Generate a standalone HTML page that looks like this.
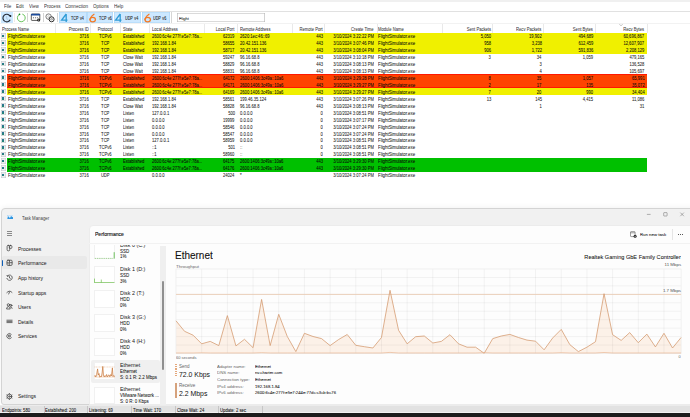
<!DOCTYPE html><html><head><meta charset="utf-8"><style>
html,body{margin:0;padding:0;}
body{width:690px;height:417px;overflow:hidden;position:relative;background:#fff;font-family:"Liberation Sans",sans-serif;}
.a{position:absolute;white-space:nowrap;}
</style></head><body>
<div class="a" style="left:0.00px;top:0.00px;width:690.00px;height:2.00px;background:#f0f0f0;"></div>
<div class="a" style="left:3.80px;top:-34.10px;line-height:80.0px;font-size:19.60px;color:#333;font-weight:normal;transform:scale(0.2325,0.2500);transform-origin:0 50%;">File</div>
<div class="a" style="left:16.00px;top:-34.10px;line-height:80.0px;font-size:19.60px;color:#333;font-weight:normal;transform:scale(0.2325,0.2500);transform-origin:0 50%;">Edit</div>
<div class="a" style="left:29.00px;top:-34.10px;line-height:80.0px;font-size:19.60px;color:#333;font-weight:normal;transform:scale(0.2325,0.2500);transform-origin:0 50%;">View</div>
<div class="a" style="left:44.00px;top:-34.10px;line-height:80.0px;font-size:19.60px;color:#333;font-weight:normal;transform:scale(0.2325,0.2500);transform-origin:0 50%;">Process</div>
<div class="a" style="left:65.00px;top:-34.10px;line-height:80.0px;font-size:19.60px;color:#333;font-weight:normal;transform:scale(0.2325,0.2500);transform-origin:0 50%;">Connection</div>
<div class="a" style="left:93.40px;top:-34.10px;line-height:80.0px;font-size:19.60px;color:#333;font-weight:normal;transform:scale(0.2325,0.2500);transform-origin:0 50%;">Options</div>
<div class="a" style="left:114.00px;top:-34.10px;line-height:80.0px;font-size:19.60px;color:#333;font-weight:normal;transform:scale(0.2325,0.2500);transform-origin:0 50%;">Help</div>
<div class="a" style="left:0.00px;top:11.00px;width:690.00px;height:1.00px;background:#e1e1e1;"></div>
<div class="a" style="left:0.00px;top:23.00px;width:690.00px;height:1.00px;background:#f2f2f2;"></div>
<div class="a" style="left:1.10px;top:12.00px;width:12.00px;height:11.00px;background:#cce8ff;"></div>
<svg class="a" style="left:0;top:0" width="60" height="25" viewBox="0 0 60 25">
<path d="M9.85 15.86 A3.8 3.8 0 1 0 10.18 19.65" fill="none" stroke="#262b36" stroke-width="1.15"/>
<circle cx="10.4" cy="16.0" r="0.95" fill="#15171c"/>
<path d="M6.5 16.2 L6.8 18.9 L8.1 19.6" fill="none" stroke="#a6bcd2" stroke-width="0.7"/>
<path d="M22.31 14.08 A3.9 3.9 0 1 1 19.35 14.47" fill="none" stroke="#62c256" stroke-width="0.95"/>
<circle cx="19.5" cy="14.3" r="0.85" fill="#0c8a18"/>
<rect x="31.3" y="14.1" width="8.5" height="6.3" rx="0.7" fill="#fff" stroke="#262626" stroke-width="0.75"/>
<rect x="31" y="13.8" width="9.1" height="1.8" rx="0.5" fill="#1d4c9c"/>
<circle cx="33.4" cy="17.7" r="0.5" fill="#333"/><circle cx="35.4" cy="17.7" r="0.5" fill="#333"/><circle cx="37.3" cy="17.7" r="0.5" fill="#333"/>
<circle cx="38.7" cy="20.0" r="1.5" fill="#111"/><circle cx="38.7" cy="20.0" r="0.55" fill="#fff"/>
<circle cx="48.6" cy="16.6" r="2.7" fill="#fff" stroke="#666" stroke-width="0.85"/>
<circle cx="48.6" cy="16.6" r="0.9" fill="none" stroke="#999" stroke-width="0.5"/>
<circle cx="51.6" cy="19.3" r="2.5" fill="#fff" stroke="#2e2e2e" stroke-width="1.0"/>
<ellipse cx="51.6" cy="19.3" rx="1.1" ry="0.7" fill="none" stroke="#555" stroke-width="0.55"/>
</svg>
<div class="a" style="left:13.50px;top:13.00px;width:0.60px;height:9.00px;background:#f0ebe6;"></div>
<div class="a" style="left:27.40px;top:13.00px;width:0.80px;height:9.00px;background:#d4d4d4;"></div>
<div class="a" style="left:42.50px;top:13.00px;width:0.80px;height:9.00px;background:#d4d4d4;"></div>
<div class="a" style="left:57.30px;top:13.00px;width:0.80px;height:9.00px;background:#d4d4d4;"></div>
<div class="a" style="left:59.30px;top:12.40px;width:27.40px;height:10.40px;background:#cce8ff;box-shadow: inset 0 0 0 0.6px #a9d5f7;"></div>
<svg class="a" style="left:59.10px;top:12px" width="12" height="11" viewBox="0 0 12 11"><path d="M7.2 2.0 L2.6 8.1 H8.5 M7.2 2.0 V10.0" fill="none" stroke="#2e9bd6" stroke-width="1.3" stroke-linejoin="miter"/></svg>
<div class="a" style="left:70.70px;top:-21.90px;line-height:80.0px;font-size:18.40px;color:#1b1b1b;font-weight:normal;word-spacing:3px;-webkit-text-stroke:0.32px #1b1b1b;transform:scale(0.2000,0.2500);transform-origin:0 50%;">TCP v4</div>
<div class="a" style="left:87.10px;top:12.40px;width:26.10px;height:10.40px;background:#cce8ff;box-shadow: inset 0 0 0 0.6px #a9d5f7;"></div>
<svg class="a" style="left:86.90px;top:12px" width="12" height="11" viewBox="0 0 12 11"><ellipse cx="5.7" cy="7.6" rx="2.75" ry="2.3" fill="none" stroke="#f47a26" stroke-width="1.25"/><path d="M7.0 2.2 Q3.6 4.2 2.95 7.4" fill="none" stroke="#f47a26" stroke-width="1.25" stroke-linecap="round"/></svg>
<div class="a" style="left:98.50px;top:-21.90px;line-height:80.0px;font-size:18.40px;color:#1b1b1b;font-weight:normal;word-spacing:3px;-webkit-text-stroke:0.32px #1b1b1b;transform:scale(0.2000,0.2500);transform-origin:0 50%;">TCP v6</div>
<div class="a" style="left:113.60px;top:12.40px;width:27.70px;height:10.40px;background:#cce8ff;box-shadow: inset 0 0 0 0.6px #a9d5f7;"></div>
<svg class="a" style="left:113.40px;top:12px" width="12" height="11" viewBox="0 0 12 11"><path d="M7.2 2.0 L2.6 8.1 H8.5 M7.2 2.0 V10.0" fill="none" stroke="#2e9bd6" stroke-width="1.3" stroke-linejoin="miter"/></svg>
<div class="a" style="left:125.00px;top:-21.90px;line-height:80.0px;font-size:18.40px;color:#1b1b1b;font-weight:normal;word-spacing:3px;-webkit-text-stroke:0.32px #1b1b1b;transform:scale(0.2000,0.2500);transform-origin:0 50%;">UDP v4</div>
<div class="a" style="left:141.70px;top:12.40px;width:28.10px;height:10.40px;background:#cce8ff;box-shadow: inset 0 0 0 0.6px #a9d5f7;"></div>
<svg class="a" style="left:141.50px;top:12px" width="12" height="11" viewBox="0 0 12 11"><ellipse cx="5.7" cy="7.6" rx="2.75" ry="2.3" fill="none" stroke="#f47a26" stroke-width="1.25"/><path d="M7.0 2.2 Q3.6 4.2 2.95 7.4" fill="none" stroke="#f47a26" stroke-width="1.25" stroke-linecap="round"/></svg>
<div class="a" style="left:153.10px;top:-21.90px;line-height:80.0px;font-size:18.40px;color:#1b1b1b;font-weight:normal;word-spacing:3px;-webkit-text-stroke:0.32px #1b1b1b;transform:scale(0.2000,0.2500);transform-origin:0 50%;">UDP v6</div>
<div class="a" style="left:177.00px;top:13.00px;width:87.50px;height:9.00px;background:#fff;box-shadow: inset 0 0 0 0.6px #b5b5b5;"></div>
<div class="a" style="left:178.80px;top:-22.50px;line-height:80.0px;font-size:17.60px;color:#111;font-weight:normal;-webkit-text-stroke:0.16px #111;transform:scale(0.2325,0.2500);transform-origin:0 50%;">Flight</div>
<div class="a" style="left:170.60px;top:12.40px;width:0.60px;height:10.40px;background:#d6d6d6;"></div>
<div class="a" style="left:54.80px;top:24.00px;width:0.60px;height:8.75px;background:#e9e9e9;"></div>
<div class="a" style="left:90.40px;top:24.00px;width:0.60px;height:8.75px;background:#e9e9e9;"></div>
<div class="a" style="left:120.00px;top:24.00px;width:0.60px;height:8.75px;background:#e9e9e9;"></div>
<div class="a" style="left:148.70px;top:24.00px;width:0.60px;height:8.75px;background:#e9e9e9;"></div>
<div class="a" style="left:204.30px;top:24.00px;width:0.60px;height:8.75px;background:#e9e9e9;"></div>
<div class="a" style="left:236.50px;top:24.00px;width:0.60px;height:8.75px;background:#e9e9e9;"></div>
<div class="a" style="left:291.70px;top:24.00px;width:0.60px;height:8.75px;background:#e9e9e9;"></div>
<div class="a" style="left:324.40px;top:24.00px;width:0.60px;height:8.75px;background:#e9e9e9;"></div>
<div class="a" style="left:376.50px;top:24.00px;width:0.60px;height:8.75px;background:#e9e9e9;"></div>
<div class="a" style="left:441.70px;top:24.00px;width:0.60px;height:8.75px;background:#e9e9e9;"></div>
<div class="a" style="left:491.70px;top:24.00px;width:0.60px;height:8.75px;background:#e9e9e9;"></div>
<div class="a" style="left:543.00px;top:24.00px;width:0.60px;height:8.75px;background:#e9e9e9;"></div>
<div class="a" style="left:595.20px;top:24.00px;width:0.60px;height:8.75px;background:#e9e9e9;"></div>
<div class="a" style="left:646.50px;top:24.00px;width:0.60px;height:8.75px;background:#e9e9e9;"></div>
<div class="a" style="left:2.00px;top:-11.40px;line-height:80.0px;font-size:19.20px;color:#3a3a3a;font-weight:normal;-webkit-text-stroke:0.20px #3a3a3a;transform:scale(0.2150,0.2500);transform-origin:0 50%;">Process Name</div>
<div class="a" style="right:601.00px;top:-11.40px;line-height:80.0px;font-size:19.20px;color:#3a3a3a;font-weight:normal;-webkit-text-stroke:0.20px #3a3a3a;text-align:right;transform:scale(0.2150,0.2500);transform-origin:100% 50%;">Process ID</div>
<div class="a" style="left:-825.03px;width:1860.47px;text-align:center;top:-11.40px;line-height:80.0px;font-size:19.20px;color:#3a3a3a;font-weight:normal;-webkit-text-stroke:0.20px #3a3a3a;transform:scale(0.2150,0.2500);transform-origin:50% 50%;">Protocol</div>
<div class="a" style="left:122.60px;top:-11.40px;line-height:80.0px;font-size:19.20px;color:#3a3a3a;font-weight:normal;-webkit-text-stroke:0.20px #3a3a3a;transform:scale(0.2150,0.2500);transform-origin:0 50%;">State</div>
<div class="a" style="left:151.80px;top:-11.40px;line-height:80.0px;font-size:19.20px;color:#3a3a3a;font-weight:normal;-webkit-text-stroke:0.20px #3a3a3a;transform:scale(0.2150,0.2500);transform-origin:0 50%;">Local Address</div>
<div class="a" style="right:455.20px;top:-11.40px;line-height:80.0px;font-size:19.20px;color:#3a3a3a;font-weight:normal;-webkit-text-stroke:0.20px #3a3a3a;text-align:right;transform:scale(0.2150,0.2500);transform-origin:100% 50%;">Local Port</div>
<div class="a" style="left:239.50px;top:-11.40px;line-height:80.0px;font-size:19.20px;color:#3a3a3a;font-weight:normal;-webkit-text-stroke:0.20px #3a3a3a;transform:scale(0.2150,0.2500);transform-origin:0 50%;">Remote Address</div>
<div class="a" style="right:367.30px;top:-11.40px;line-height:80.0px;font-size:19.20px;color:#3a3a3a;font-weight:normal;-webkit-text-stroke:0.20px #3a3a3a;text-align:right;transform:scale(0.2150,0.2500);transform-origin:100% 50%;">Remote Port</div>
<div class="a" style="right:316.20px;top:-11.40px;line-height:80.0px;font-size:19.20px;color:#3a3a3a;font-weight:normal;-webkit-text-stroke:0.20px #3a3a3a;text-align:right;transform:scale(0.2150,0.2500);transform-origin:100% 50%;">Create Time</div>
<div class="a" style="left:378.30px;top:-11.40px;line-height:80.0px;font-size:19.20px;color:#3a3a3a;font-weight:normal;-webkit-text-stroke:0.20px #3a3a3a;transform:scale(0.2150,0.2500);transform-origin:0 50%;">Module Name</div>
<div class="a" style="right:199.10px;top:-11.40px;line-height:80.0px;font-size:19.20px;color:#3a3a3a;font-weight:normal;-webkit-text-stroke:0.20px #3a3a3a;text-align:right;transform:scale(0.2150,0.2500);transform-origin:100% 50%;">Sent Packets</div>
<div class="a" style="right:148.40px;top:-11.40px;line-height:80.0px;font-size:19.20px;color:#3a3a3a;font-weight:normal;-webkit-text-stroke:0.20px #3a3a3a;text-align:right;transform:scale(0.2150,0.2500);transform-origin:100% 50%;">Recv Packets</div>
<div class="a" style="right:97.00px;top:-11.40px;line-height:80.0px;font-size:19.20px;color:#3a3a3a;font-weight:normal;-webkit-text-stroke:0.20px #3a3a3a;text-align:right;transform:scale(0.2150,0.2500);transform-origin:100% 50%;">Sent Bytes</div>
<div class="a" style="right:45.60px;top:-11.40px;line-height:80.0px;font-size:19.20px;color:#3a3a3a;font-weight:normal;-webkit-text-stroke:0.20px #3a3a3a;text-align:right;transform:scale(0.2150,0.2500);transform-origin:100% 50%;">Recv Bytes</div>
<svg class="a" style="left:619px;top:23.6px" width="4" height="2" viewBox="0 0 4 2"><path d="M0.3 0.3 L2 1.7 L3.7 0.3" fill="none" stroke="#888" stroke-width="0.5"/></svg>
<div class="a" style="left:6.90px;top:32.75px;width:640.30px;height:6.95px;background:#f0f000;"></div>
<div class="a" style="left:1.2px;top:33.35px;width:4.7px;height:5.3px;background:#eceef0;box-shadow:inset 0 0 0 0.5px #c4c8cc;"></div>
<div class="a" style="left:2.4px;top:34.75px;width:1.6px;height:2.6px;background:linear-gradient(#2f6fa0,#1e8a6a);"></div>
<div class="a" style="left:8.00px;top:-3.77px;line-height:80.0px;font-size:19.20px;color:#0a0a0a;font-weight:normal;-webkit-text-stroke:0.20px #0a0a0a;transform:scale(0.2275,0.2500);transform-origin:0 50%;">FlightSimulator.exe</div>
<div class="a" style="right:601.20px;top:-3.77px;line-height:80.0px;font-size:19.20px;color:#0a0a0a;font-weight:normal;-webkit-text-stroke:0.20px #0a0a0a;text-align:right;transform:scale(0.2150,0.2500);transform-origin:100% 50%;">3716</div>
<div class="a" style="left:-824.83px;width:1860.47px;text-align:center;top:-3.77px;line-height:80.0px;font-size:19.20px;color:#0a0a0a;font-weight:normal;-webkit-text-stroke:0.20px #0a0a0a;transform:scale(0.2150,0.2500);transform-origin:50% 50%;">TCPv6</div>
<div class="a" style="left:122.60px;top:-3.77px;line-height:80.0px;font-size:19.20px;color:#0a0a0a;font-weight:normal;-webkit-text-stroke:0.20px #0a0a0a;transform:scale(0.2150,0.2500);transform-origin:0 50%;">Established</div>
<div class="a" style="left:151.80px;top:-3.77px;line-height:80.0px;font-size:19.20px;color:#0a0a0a;font-weight:normal;-webkit-text-stroke:0.20px #0a0a0a;transform:scale(0.2150,0.2500);transform-origin:0 50%;">2600:6c4e:277f:e5e7:78a...</div>
<div class="a" style="right:455.20px;top:-3.77px;line-height:80.0px;font-size:19.20px;color:#0a0a0a;font-weight:normal;-webkit-text-stroke:0.20px #0a0a0a;text-align:right;transform:scale(0.2150,0.2500);transform-origin:100% 50%;">62319</div>
<div class="a" style="left:239.50px;top:-3.77px;line-height:80.0px;font-size:19.20px;color:#0a0a0a;font-weight:normal;-webkit-text-stroke:0.20px #0a0a0a;transform:scale(0.2150,0.2500);transform-origin:0 50%;">2620:1ec:46::69</div>
<div class="a" style="right:367.30px;top:-3.77px;line-height:80.0px;font-size:19.20px;color:#0a0a0a;font-weight:normal;-webkit-text-stroke:0.20px #0a0a0a;text-align:right;transform:scale(0.2150,0.2500);transform-origin:100% 50%;">443</div>
<div class="a" style="right:316.20px;top:-3.77px;line-height:80.0px;font-size:19.20px;color:#0a0a0a;font-weight:normal;-webkit-text-stroke:0.20px #0a0a0a;text-align:right;transform:scale(0.2150,0.2500);transform-origin:100% 50%;">3/10/2024 3:22:22 PM</div>
<div class="a" style="left:378.30px;top:-3.77px;line-height:80.0px;font-size:19.20px;color:#0a0a0a;font-weight:normal;-webkit-text-stroke:0.20px #0a0a0a;transform:scale(0.2275,0.2500);transform-origin:0 50%;">FlightSimulator.exe</div>
<div class="a" style="right:199.10px;top:-3.77px;line-height:80.0px;font-size:19.20px;color:#0a0a0a;font-weight:normal;-webkit-text-stroke:0.20px #0a0a0a;text-align:right;transform:scale(0.2150,0.2500);transform-origin:100% 50%;">5,050</div>
<div class="a" style="right:148.40px;top:-3.77px;line-height:80.0px;font-size:19.20px;color:#0a0a0a;font-weight:normal;-webkit-text-stroke:0.20px #0a0a0a;text-align:right;transform:scale(0.2150,0.2500);transform-origin:100% 50%;">19,902</div>
<div class="a" style="right:97.00px;top:-3.77px;line-height:80.0px;font-size:19.20px;color:#0a0a0a;font-weight:normal;-webkit-text-stroke:0.20px #0a0a0a;text-align:right;transform:scale(0.2150,0.2500);transform-origin:100% 50%;">494,689</div>
<div class="a" style="right:45.60px;top:-3.77px;line-height:80.0px;font-size:19.20px;color:#0a0a0a;font-weight:normal;-webkit-text-stroke:0.20px #0a0a0a;text-align:right;transform:scale(0.2150,0.2500);transform-origin:100% 50%;">60,696,867</div>
<div class="a" style="left:6.90px;top:39.70px;width:640.30px;height:6.95px;background:#f0f000;"></div>
<div class="a" style="left:1.2px;top:40.30px;width:4.7px;height:5.3px;background:#eceef0;box-shadow:inset 0 0 0 0.5px #c4c8cc;"></div>
<div class="a" style="left:2.4px;top:41.70px;width:1.6px;height:2.6px;background:linear-gradient(#2f6fa0,#1e8a6a);"></div>
<div class="a" style="left:8.00px;top:3.18px;line-height:80.0px;font-size:19.20px;color:#0a0a0a;font-weight:normal;-webkit-text-stroke:0.20px #0a0a0a;transform:scale(0.2275,0.2500);transform-origin:0 50%;">FlightSimulator.exe</div>
<div class="a" style="right:601.20px;top:3.18px;line-height:80.0px;font-size:19.20px;color:#0a0a0a;font-weight:normal;-webkit-text-stroke:0.20px #0a0a0a;text-align:right;transform:scale(0.2150,0.2500);transform-origin:100% 50%;">3716</div>
<div class="a" style="left:-824.83px;width:1860.47px;text-align:center;top:3.18px;line-height:80.0px;font-size:19.20px;color:#0a0a0a;font-weight:normal;-webkit-text-stroke:0.20px #0a0a0a;transform:scale(0.2150,0.2500);transform-origin:50% 50%;">TCP</div>
<div class="a" style="left:122.60px;top:3.18px;line-height:80.0px;font-size:19.20px;color:#0a0a0a;font-weight:normal;-webkit-text-stroke:0.20px #0a0a0a;transform:scale(0.2150,0.2500);transform-origin:0 50%;">Established</div>
<div class="a" style="left:151.80px;top:3.18px;line-height:80.0px;font-size:19.20px;color:#0a0a0a;font-weight:normal;-webkit-text-stroke:0.20px #0a0a0a;transform:scale(0.2150,0.2500);transform-origin:0 50%;">192.168.1.84</div>
<div class="a" style="right:455.20px;top:3.18px;line-height:80.0px;font-size:19.20px;color:#0a0a0a;font-weight:normal;-webkit-text-stroke:0.20px #0a0a0a;text-align:right;transform:scale(0.2150,0.2500);transform-origin:100% 50%;">58655</div>
<div class="a" style="left:239.50px;top:3.18px;line-height:80.0px;font-size:19.20px;color:#0a0a0a;font-weight:normal;-webkit-text-stroke:0.20px #0a0a0a;transform:scale(0.2150,0.2500);transform-origin:0 50%;">20.42.151.136</div>
<div class="a" style="right:367.30px;top:3.18px;line-height:80.0px;font-size:19.20px;color:#0a0a0a;font-weight:normal;-webkit-text-stroke:0.20px #0a0a0a;text-align:right;transform:scale(0.2150,0.2500);transform-origin:100% 50%;">443</div>
<div class="a" style="right:316.20px;top:3.18px;line-height:80.0px;font-size:19.20px;color:#0a0a0a;font-weight:normal;-webkit-text-stroke:0.20px #0a0a0a;text-align:right;transform:scale(0.2150,0.2500);transform-origin:100% 50%;">3/10/2024 3:07:46 PM</div>
<div class="a" style="left:378.30px;top:3.18px;line-height:80.0px;font-size:19.20px;color:#0a0a0a;font-weight:normal;-webkit-text-stroke:0.20px #0a0a0a;transform:scale(0.2275,0.2500);transform-origin:0 50%;">FlightSimulator.exe</div>
<div class="a" style="right:199.10px;top:3.18px;line-height:80.0px;font-size:19.20px;color:#0a0a0a;font-weight:normal;-webkit-text-stroke:0.20px #0a0a0a;text-align:right;transform:scale(0.2150,0.2500);transform-origin:100% 50%;">958</div>
<div class="a" style="right:148.40px;top:3.18px;line-height:80.0px;font-size:19.20px;color:#0a0a0a;font-weight:normal;-webkit-text-stroke:0.20px #0a0a0a;text-align:right;transform:scale(0.2150,0.2500);transform-origin:100% 50%;">3,238</div>
<div class="a" style="right:97.00px;top:3.18px;line-height:80.0px;font-size:19.20px;color:#0a0a0a;font-weight:normal;-webkit-text-stroke:0.20px #0a0a0a;text-align:right;transform:scale(0.2150,0.2500);transform-origin:100% 50%;">612,459</div>
<div class="a" style="right:45.60px;top:3.18px;line-height:80.0px;font-size:19.20px;color:#0a0a0a;font-weight:normal;-webkit-text-stroke:0.20px #0a0a0a;text-align:right;transform:scale(0.2150,0.2500);transform-origin:100% 50%;">12,607,907</div>
<div class="a" style="left:6.90px;top:46.65px;width:640.30px;height:6.95px;background:#f0f000;"></div>
<div class="a" style="left:1.2px;top:47.25px;width:4.7px;height:5.3px;background:#eceef0;box-shadow:inset 0 0 0 0.5px #c4c8cc;"></div>
<div class="a" style="left:2.4px;top:48.65px;width:1.6px;height:2.6px;background:linear-gradient(#2f6fa0,#1e8a6a);"></div>
<div class="a" style="left:8.00px;top:10.12px;line-height:80.0px;font-size:19.20px;color:#0a0a0a;font-weight:normal;-webkit-text-stroke:0.20px #0a0a0a;transform:scale(0.2275,0.2500);transform-origin:0 50%;">FlightSimulator.exe</div>
<div class="a" style="right:601.20px;top:10.12px;line-height:80.0px;font-size:19.20px;color:#0a0a0a;font-weight:normal;-webkit-text-stroke:0.20px #0a0a0a;text-align:right;transform:scale(0.2150,0.2500);transform-origin:100% 50%;">3716</div>
<div class="a" style="left:-824.83px;width:1860.47px;text-align:center;top:10.12px;line-height:80.0px;font-size:19.20px;color:#0a0a0a;font-weight:normal;-webkit-text-stroke:0.20px #0a0a0a;transform:scale(0.2150,0.2500);transform-origin:50% 50%;">TCP</div>
<div class="a" style="left:122.60px;top:10.12px;line-height:80.0px;font-size:19.20px;color:#0a0a0a;font-weight:normal;-webkit-text-stroke:0.20px #0a0a0a;transform:scale(0.2150,0.2500);transform-origin:0 50%;">Established</div>
<div class="a" style="left:151.80px;top:10.12px;line-height:80.0px;font-size:19.20px;color:#0a0a0a;font-weight:normal;-webkit-text-stroke:0.20px #0a0a0a;transform:scale(0.2150,0.2500);transform-origin:0 50%;">192.168.1.84</div>
<div class="a" style="right:455.20px;top:10.12px;line-height:80.0px;font-size:19.20px;color:#0a0a0a;font-weight:normal;-webkit-text-stroke:0.20px #0a0a0a;text-align:right;transform:scale(0.2150,0.2500);transform-origin:100% 50%;">58717</div>
<div class="a" style="left:239.50px;top:10.12px;line-height:80.0px;font-size:19.20px;color:#0a0a0a;font-weight:normal;-webkit-text-stroke:0.20px #0a0a0a;transform:scale(0.2150,0.2500);transform-origin:0 50%;">20.42.151.136</div>
<div class="a" style="right:367.30px;top:10.12px;line-height:80.0px;font-size:19.20px;color:#0a0a0a;font-weight:normal;-webkit-text-stroke:0.20px #0a0a0a;text-align:right;transform:scale(0.2150,0.2500);transform-origin:100% 50%;">443</div>
<div class="a" style="right:316.20px;top:10.12px;line-height:80.0px;font-size:19.20px;color:#0a0a0a;font-weight:normal;-webkit-text-stroke:0.20px #0a0a0a;text-align:right;transform:scale(0.2150,0.2500);transform-origin:100% 50%;">3/10/2024 3:08:04 PM</div>
<div class="a" style="left:378.30px;top:10.12px;line-height:80.0px;font-size:19.20px;color:#0a0a0a;font-weight:normal;-webkit-text-stroke:0.20px #0a0a0a;transform:scale(0.2275,0.2500);transform-origin:0 50%;">FlightSimulator.exe</div>
<div class="a" style="right:199.10px;top:10.12px;line-height:80.0px;font-size:19.20px;color:#0a0a0a;font-weight:normal;-webkit-text-stroke:0.20px #0a0a0a;text-align:right;transform:scale(0.2150,0.2500);transform-origin:100% 50%;">906</div>
<div class="a" style="right:148.40px;top:10.12px;line-height:80.0px;font-size:19.20px;color:#0a0a0a;font-weight:normal;-webkit-text-stroke:0.20px #0a0a0a;text-align:right;transform:scale(0.2150,0.2500);transform-origin:100% 50%;">1,722</div>
<div class="a" style="right:97.00px;top:10.12px;line-height:80.0px;font-size:19.20px;color:#0a0a0a;font-weight:normal;-webkit-text-stroke:0.20px #0a0a0a;text-align:right;transform:scale(0.2150,0.2500);transform-origin:100% 50%;">591,836</div>
<div class="a" style="right:45.60px;top:10.12px;line-height:80.0px;font-size:19.20px;color:#0a0a0a;font-weight:normal;-webkit-text-stroke:0.20px #0a0a0a;text-align:right;transform:scale(0.2150,0.2500);transform-origin:100% 50%;">2,208,129</div>
<div class="a" style="left:1.2px;top:54.20px;width:4.7px;height:5.3px;background:#eceef0;box-shadow:inset 0 0 0 0.5px #c4c8cc;"></div>
<div class="a" style="left:2.4px;top:55.60px;width:1.6px;height:2.6px;background:linear-gradient(#2f6fa0,#1e8a6a);"></div>
<div class="a" style="left:8.00px;top:17.08px;line-height:80.0px;font-size:19.20px;color:#1a1a1a;font-weight:normal;-webkit-text-stroke:0.20px #1a1a1a;transform:scale(0.2275,0.2500);transform-origin:0 50%;">FlightSimulator.exe</div>
<div class="a" style="right:601.20px;top:17.08px;line-height:80.0px;font-size:19.20px;color:#1a1a1a;font-weight:normal;-webkit-text-stroke:0.20px #1a1a1a;text-align:right;transform:scale(0.2150,0.2500);transform-origin:100% 50%;">3716</div>
<div class="a" style="left:-824.83px;width:1860.47px;text-align:center;top:17.08px;line-height:80.0px;font-size:19.20px;color:#1a1a1a;font-weight:normal;-webkit-text-stroke:0.20px #1a1a1a;transform:scale(0.2150,0.2500);transform-origin:50% 50%;">TCP</div>
<div class="a" style="left:122.60px;top:17.08px;line-height:80.0px;font-size:19.20px;color:#1a1a1a;font-weight:normal;-webkit-text-stroke:0.20px #1a1a1a;transform:scale(0.2150,0.2500);transform-origin:0 50%;">Close Wait</div>
<div class="a" style="left:151.80px;top:17.08px;line-height:80.0px;font-size:19.20px;color:#1a1a1a;font-weight:normal;-webkit-text-stroke:0.20px #1a1a1a;transform:scale(0.2150,0.2500);transform-origin:0 50%;">192.168.1.84</div>
<div class="a" style="right:455.20px;top:17.08px;line-height:80.0px;font-size:19.20px;color:#1a1a1a;font-weight:normal;-webkit-text-stroke:0.20px #1a1a1a;text-align:right;transform:scale(0.2150,0.2500);transform-origin:100% 50%;">59247</div>
<div class="a" style="left:239.50px;top:17.08px;line-height:80.0px;font-size:19.20px;color:#1a1a1a;font-weight:normal;-webkit-text-stroke:0.20px #1a1a1a;transform:scale(0.2150,0.2500);transform-origin:0 50%;">96.16.68.8</div>
<div class="a" style="right:367.30px;top:17.08px;line-height:80.0px;font-size:19.20px;color:#1a1a1a;font-weight:normal;-webkit-text-stroke:0.20px #1a1a1a;text-align:right;transform:scale(0.2150,0.2500);transform-origin:100% 50%;">443</div>
<div class="a" style="right:316.20px;top:17.08px;line-height:80.0px;font-size:19.20px;color:#1a1a1a;font-weight:normal;-webkit-text-stroke:0.20px #1a1a1a;text-align:right;transform:scale(0.2150,0.2500);transform-origin:100% 50%;">3/10/2024 3:10:18 PM</div>
<div class="a" style="left:378.30px;top:17.08px;line-height:80.0px;font-size:19.20px;color:#1a1a1a;font-weight:normal;-webkit-text-stroke:0.20px #1a1a1a;transform:scale(0.2275,0.2500);transform-origin:0 50%;">FlightSimulator.exe</div>
<div class="a" style="right:199.10px;top:17.08px;line-height:80.0px;font-size:19.20px;color:#1a1a1a;font-weight:normal;-webkit-text-stroke:0.20px #1a1a1a;text-align:right;transform:scale(0.2150,0.2500);transform-origin:100% 50%;">3</div>
<div class="a" style="right:148.40px;top:17.08px;line-height:80.0px;font-size:19.20px;color:#1a1a1a;font-weight:normal;-webkit-text-stroke:0.20px #1a1a1a;text-align:right;transform:scale(0.2150,0.2500);transform-origin:100% 50%;">34</div>
<div class="a" style="right:97.00px;top:17.08px;line-height:80.0px;font-size:19.20px;color:#1a1a1a;font-weight:normal;-webkit-text-stroke:0.20px #1a1a1a;text-align:right;transform:scale(0.2150,0.2500);transform-origin:100% 50%;">1,059</div>
<div class="a" style="right:45.60px;top:17.08px;line-height:80.0px;font-size:19.20px;color:#1a1a1a;font-weight:normal;-webkit-text-stroke:0.20px #1a1a1a;text-align:right;transform:scale(0.2150,0.2500);transform-origin:100% 50%;">479,165</div>
<div class="a" style="left:1.2px;top:61.15px;width:4.7px;height:5.3px;background:#eceef0;box-shadow:inset 0 0 0 0.5px #c4c8cc;"></div>
<div class="a" style="left:2.4px;top:62.55px;width:1.6px;height:2.6px;background:linear-gradient(#2f6fa0,#1e8a6a);"></div>
<div class="a" style="left:8.00px;top:24.02px;line-height:80.0px;font-size:19.20px;color:#1a1a1a;font-weight:normal;-webkit-text-stroke:0.20px #1a1a1a;transform:scale(0.2275,0.2500);transform-origin:0 50%;">FlightSimulator.exe</div>
<div class="a" style="right:601.20px;top:24.02px;line-height:80.0px;font-size:19.20px;color:#1a1a1a;font-weight:normal;-webkit-text-stroke:0.20px #1a1a1a;text-align:right;transform:scale(0.2150,0.2500);transform-origin:100% 50%;">3716</div>
<div class="a" style="left:-824.83px;width:1860.47px;text-align:center;top:24.02px;line-height:80.0px;font-size:19.20px;color:#1a1a1a;font-weight:normal;-webkit-text-stroke:0.20px #1a1a1a;transform:scale(0.2150,0.2500);transform-origin:50% 50%;">TCP</div>
<div class="a" style="left:122.60px;top:24.02px;line-height:80.0px;font-size:19.20px;color:#1a1a1a;font-weight:normal;-webkit-text-stroke:0.20px #1a1a1a;transform:scale(0.2150,0.2500);transform-origin:0 50%;">Close Wait</div>
<div class="a" style="left:151.80px;top:24.02px;line-height:80.0px;font-size:19.20px;color:#1a1a1a;font-weight:normal;-webkit-text-stroke:0.20px #1a1a1a;transform:scale(0.2150,0.2500);transform-origin:0 50%;">192.168.1.84</div>
<div class="a" style="right:455.20px;top:24.02px;line-height:80.0px;font-size:19.20px;color:#1a1a1a;font-weight:normal;-webkit-text-stroke:0.20px #1a1a1a;text-align:right;transform:scale(0.2150,0.2500);transform-origin:100% 50%;">58829</div>
<div class="a" style="left:239.50px;top:24.02px;line-height:80.0px;font-size:19.20px;color:#1a1a1a;font-weight:normal;-webkit-text-stroke:0.20px #1a1a1a;transform:scale(0.2150,0.2500);transform-origin:0 50%;">96.16.68.8</div>
<div class="a" style="right:367.30px;top:24.02px;line-height:80.0px;font-size:19.20px;color:#1a1a1a;font-weight:normal;-webkit-text-stroke:0.20px #1a1a1a;text-align:right;transform:scale(0.2150,0.2500);transform-origin:100% 50%;">443</div>
<div class="a" style="right:316.20px;top:24.02px;line-height:80.0px;font-size:19.20px;color:#1a1a1a;font-weight:normal;-webkit-text-stroke:0.20px #1a1a1a;text-align:right;transform:scale(0.2150,0.2500);transform-origin:100% 50%;">3/10/2024 3:08:13 PM</div>
<div class="a" style="left:378.30px;top:24.02px;line-height:80.0px;font-size:19.20px;color:#1a1a1a;font-weight:normal;-webkit-text-stroke:0.20px #1a1a1a;transform:scale(0.2275,0.2500);transform-origin:0 50%;">FlightSimulator.exe</div>
<div class="a" style="right:148.40px;top:24.02px;line-height:80.0px;font-size:19.20px;color:#1a1a1a;font-weight:normal;-webkit-text-stroke:0.20px #1a1a1a;text-align:right;transform:scale(0.2150,0.2500);transform-origin:100% 50%;">3</div>
<div class="a" style="right:45.60px;top:24.02px;line-height:80.0px;font-size:19.20px;color:#1a1a1a;font-weight:normal;-webkit-text-stroke:0.20px #1a1a1a;text-align:right;transform:scale(0.2150,0.2500);transform-origin:100% 50%;">136,528</div>
<div class="a" style="left:1.2px;top:68.10px;width:4.7px;height:5.3px;background:#eceef0;box-shadow:inset 0 0 0 0.5px #c4c8cc;"></div>
<div class="a" style="left:2.4px;top:69.50px;width:1.6px;height:2.6px;background:linear-gradient(#2f6fa0,#1e8a6a);"></div>
<div class="a" style="left:8.00px;top:30.97px;line-height:80.0px;font-size:19.20px;color:#1a1a1a;font-weight:normal;-webkit-text-stroke:0.20px #1a1a1a;transform:scale(0.2275,0.2500);transform-origin:0 50%;">FlightSimulator.exe</div>
<div class="a" style="right:601.20px;top:30.97px;line-height:80.0px;font-size:19.20px;color:#1a1a1a;font-weight:normal;-webkit-text-stroke:0.20px #1a1a1a;text-align:right;transform:scale(0.2150,0.2500);transform-origin:100% 50%;">3716</div>
<div class="a" style="left:-824.83px;width:1860.47px;text-align:center;top:30.97px;line-height:80.0px;font-size:19.20px;color:#1a1a1a;font-weight:normal;-webkit-text-stroke:0.20px #1a1a1a;transform:scale(0.2150,0.2500);transform-origin:50% 50%;">TCP</div>
<div class="a" style="left:122.60px;top:30.97px;line-height:80.0px;font-size:19.20px;color:#1a1a1a;font-weight:normal;-webkit-text-stroke:0.20px #1a1a1a;transform:scale(0.2150,0.2500);transform-origin:0 50%;">Close Wait</div>
<div class="a" style="left:151.80px;top:30.97px;line-height:80.0px;font-size:19.20px;color:#1a1a1a;font-weight:normal;-webkit-text-stroke:0.20px #1a1a1a;transform:scale(0.2150,0.2500);transform-origin:0 50%;">192.168.1.84</div>
<div class="a" style="right:455.20px;top:30.97px;line-height:80.0px;font-size:19.20px;color:#1a1a1a;font-weight:normal;-webkit-text-stroke:0.20px #1a1a1a;text-align:right;transform:scale(0.2150,0.2500);transform-origin:100% 50%;">58831</div>
<div class="a" style="left:239.50px;top:30.97px;line-height:80.0px;font-size:19.20px;color:#1a1a1a;font-weight:normal;-webkit-text-stroke:0.20px #1a1a1a;transform:scale(0.2150,0.2500);transform-origin:0 50%;">96.16.68.8</div>
<div class="a" style="right:367.30px;top:30.97px;line-height:80.0px;font-size:19.20px;color:#1a1a1a;font-weight:normal;-webkit-text-stroke:0.20px #1a1a1a;text-align:right;transform:scale(0.2150,0.2500);transform-origin:100% 50%;">443</div>
<div class="a" style="right:316.20px;top:30.97px;line-height:80.0px;font-size:19.20px;color:#1a1a1a;font-weight:normal;-webkit-text-stroke:0.20px #1a1a1a;text-align:right;transform:scale(0.2150,0.2500);transform-origin:100% 50%;">3/10/2024 3:08:13 PM</div>
<div class="a" style="left:378.30px;top:30.97px;line-height:80.0px;font-size:19.20px;color:#1a1a1a;font-weight:normal;-webkit-text-stroke:0.20px #1a1a1a;transform:scale(0.2275,0.2500);transform-origin:0 50%;">FlightSimulator.exe</div>
<div class="a" style="right:148.40px;top:30.97px;line-height:80.0px;font-size:19.20px;color:#1a1a1a;font-weight:normal;-webkit-text-stroke:0.20px #1a1a1a;text-align:right;transform:scale(0.2150,0.2500);transform-origin:100% 50%;">4</div>
<div class="a" style="right:45.60px;top:30.97px;line-height:80.0px;font-size:19.20px;color:#1a1a1a;font-weight:normal;-webkit-text-stroke:0.20px #1a1a1a;text-align:right;transform:scale(0.2150,0.2500);transform-origin:100% 50%;">105,697</div>
<div class="a" style="left:6.90px;top:74.45px;width:640.30px;height:6.95px;background:#ff4400;"></div>
<div class="a" style="left:6.90px;top:74.45px;width:640.30px;height:0.90px;background:#ff1800;"></div>
<div class="a" style="left:1.2px;top:75.05px;width:4.7px;height:5.3px;background:#eceef0;box-shadow:inset 0 0 0 0.5px #c4c8cc;"></div>
<div class="a" style="left:2.4px;top:76.45px;width:1.6px;height:2.6px;background:linear-gradient(#2f6fa0,#1e8a6a);"></div>
<div class="a" style="left:8.00px;top:37.92px;line-height:80.0px;font-size:19.20px;color:#0a0a0a;font-weight:normal;-webkit-text-stroke:0.20px #0a0a0a;transform:scale(0.2275,0.2500);transform-origin:0 50%;">FlightSimulator.exe</div>
<div class="a" style="right:601.20px;top:37.92px;line-height:80.0px;font-size:19.20px;color:#0a0a0a;font-weight:normal;-webkit-text-stroke:0.20px #0a0a0a;text-align:right;transform:scale(0.2150,0.2500);transform-origin:100% 50%;">3716</div>
<div class="a" style="left:-824.83px;width:1860.47px;text-align:center;top:37.92px;line-height:80.0px;font-size:19.20px;color:#0a0a0a;font-weight:normal;-webkit-text-stroke:0.20px #0a0a0a;transform:scale(0.2150,0.2500);transform-origin:50% 50%;">TCPv6</div>
<div class="a" style="left:122.60px;top:37.92px;line-height:80.0px;font-size:19.20px;color:#0a0a0a;font-weight:normal;-webkit-text-stroke:0.20px #0a0a0a;transform:scale(0.2150,0.2500);transform-origin:0 50%;">Established</div>
<div class="a" style="left:151.80px;top:37.92px;line-height:80.0px;font-size:19.20px;color:#0a0a0a;font-weight:normal;-webkit-text-stroke:0.20px #0a0a0a;transform:scale(0.2150,0.2500);transform-origin:0 50%;">2600:6c4e:277f:e5e7:78a...</div>
<div class="a" style="right:455.20px;top:37.92px;line-height:80.0px;font-size:19.20px;color:#0a0a0a;font-weight:normal;-webkit-text-stroke:0.20px #0a0a0a;text-align:right;transform:scale(0.2150,0.2500);transform-origin:100% 50%;">64172</div>
<div class="a" style="left:239.50px;top:37.92px;line-height:80.0px;font-size:19.20px;color:#0a0a0a;font-weight:normal;-webkit-text-stroke:0.20px #0a0a0a;transform:scale(0.2150,0.2500);transform-origin:0 50%;">2600:1406:3c49a::10a6</div>
<div class="a" style="right:367.30px;top:37.92px;line-height:80.0px;font-size:19.20px;color:#0a0a0a;font-weight:normal;-webkit-text-stroke:0.20px #0a0a0a;text-align:right;transform:scale(0.2150,0.2500);transform-origin:100% 50%;">443</div>
<div class="a" style="right:316.20px;top:37.92px;line-height:80.0px;font-size:19.20px;color:#0a0a0a;font-weight:normal;-webkit-text-stroke:0.20px #0a0a0a;text-align:right;transform:scale(0.2150,0.2500);transform-origin:100% 50%;">3/10/2024 3:29:28 PM</div>
<div class="a" style="left:378.30px;top:37.92px;line-height:80.0px;font-size:19.20px;color:#0a0a0a;font-weight:normal;-webkit-text-stroke:0.20px #0a0a0a;transform:scale(0.2275,0.2500);transform-origin:0 50%;">FlightSimulator.exe</div>
<div class="a" style="right:199.10px;top:37.92px;line-height:80.0px;font-size:19.20px;color:#0a0a0a;font-weight:normal;-webkit-text-stroke:0.20px #0a0a0a;text-align:right;transform:scale(0.2150,0.2500);transform-origin:100% 50%;">8</div>
<div class="a" style="right:148.40px;top:37.92px;line-height:80.0px;font-size:19.20px;color:#0a0a0a;font-weight:normal;-webkit-text-stroke:0.20px #0a0a0a;text-align:right;transform:scale(0.2150,0.2500);transform-origin:100% 50%;">35</div>
<div class="a" style="right:97.00px;top:37.92px;line-height:80.0px;font-size:19.20px;color:#0a0a0a;font-weight:normal;-webkit-text-stroke:0.20px #0a0a0a;text-align:right;transform:scale(0.2150,0.2500);transform-origin:100% 50%;">1,057</div>
<div class="a" style="right:45.60px;top:37.92px;line-height:80.0px;font-size:19.20px;color:#0a0a0a;font-weight:normal;-webkit-text-stroke:0.20px #0a0a0a;text-align:right;transform:scale(0.2150,0.2500);transform-origin:100% 50%;">65,991</div>
<div class="a" style="left:6.90px;top:81.40px;width:640.30px;height:6.95px;background:#ff4400;"></div>
<div class="a" style="left:6.90px;top:87.45px;width:640.30px;height:0.90px;background:#ff1800;"></div>
<div class="a" style="left:1.2px;top:82.00px;width:4.7px;height:5.3px;background:#eceef0;box-shadow:inset 0 0 0 0.5px #c4c8cc;"></div>
<div class="a" style="left:2.4px;top:83.40px;width:1.6px;height:2.6px;background:linear-gradient(#2f6fa0,#1e8a6a);"></div>
<div class="a" style="left:8.00px;top:44.88px;line-height:80.0px;font-size:19.20px;color:#0a0a0a;font-weight:normal;-webkit-text-stroke:0.20px #0a0a0a;transform:scale(0.2275,0.2500);transform-origin:0 50%;">FlightSimulator.exe</div>
<div class="a" style="right:601.20px;top:44.88px;line-height:80.0px;font-size:19.20px;color:#0a0a0a;font-weight:normal;-webkit-text-stroke:0.20px #0a0a0a;text-align:right;transform:scale(0.2150,0.2500);transform-origin:100% 50%;">3716</div>
<div class="a" style="left:-824.83px;width:1860.47px;text-align:center;top:44.88px;line-height:80.0px;font-size:19.20px;color:#0a0a0a;font-weight:normal;-webkit-text-stroke:0.20px #0a0a0a;transform:scale(0.2150,0.2500);transform-origin:50% 50%;">TCPv6</div>
<div class="a" style="left:122.60px;top:44.88px;line-height:80.0px;font-size:19.20px;color:#0a0a0a;font-weight:normal;-webkit-text-stroke:0.20px #0a0a0a;transform:scale(0.2150,0.2500);transform-origin:0 50%;">Established</div>
<div class="a" style="left:151.80px;top:44.88px;line-height:80.0px;font-size:19.20px;color:#0a0a0a;font-weight:normal;-webkit-text-stroke:0.20px #0a0a0a;transform:scale(0.2150,0.2500);transform-origin:0 50%;">2600:6c4e:277f:e5e7:78a...</div>
<div class="a" style="right:455.20px;top:44.88px;line-height:80.0px;font-size:19.20px;color:#0a0a0a;font-weight:normal;-webkit-text-stroke:0.20px #0a0a0a;text-align:right;transform:scale(0.2150,0.2500);transform-origin:100% 50%;">64171</div>
<div class="a" style="left:239.50px;top:44.88px;line-height:80.0px;font-size:19.20px;color:#0a0a0a;font-weight:normal;-webkit-text-stroke:0.20px #0a0a0a;transform:scale(0.2150,0.2500);transform-origin:0 50%;">2600:1406:3c49a::10a6</div>
<div class="a" style="right:367.30px;top:44.88px;line-height:80.0px;font-size:19.20px;color:#0a0a0a;font-weight:normal;-webkit-text-stroke:0.20px #0a0a0a;text-align:right;transform:scale(0.2150,0.2500);transform-origin:100% 50%;">443</div>
<div class="a" style="right:316.20px;top:44.88px;line-height:80.0px;font-size:19.20px;color:#0a0a0a;font-weight:normal;-webkit-text-stroke:0.20px #0a0a0a;text-align:right;transform:scale(0.2150,0.2500);transform-origin:100% 50%;">3/10/2024 3:29:27 PM</div>
<div class="a" style="left:378.30px;top:44.88px;line-height:80.0px;font-size:19.20px;color:#0a0a0a;font-weight:normal;-webkit-text-stroke:0.20px #0a0a0a;transform:scale(0.2275,0.2500);transform-origin:0 50%;">FlightSimulator.exe</div>
<div class="a" style="right:199.10px;top:44.88px;line-height:80.0px;font-size:19.20px;color:#0a0a0a;font-weight:normal;-webkit-text-stroke:0.20px #0a0a0a;text-align:right;transform:scale(0.2150,0.2500);transform-origin:100% 50%;">2</div>
<div class="a" style="right:148.40px;top:44.88px;line-height:80.0px;font-size:19.20px;color:#0a0a0a;font-weight:normal;-webkit-text-stroke:0.20px #0a0a0a;text-align:right;transform:scale(0.2150,0.2500);transform-origin:100% 50%;">17</div>
<div class="a" style="right:97.00px;top:44.88px;line-height:80.0px;font-size:19.20px;color:#0a0a0a;font-weight:normal;-webkit-text-stroke:0.20px #0a0a0a;text-align:right;transform:scale(0.2150,0.2500);transform-origin:100% 50%;">135</div>
<div class="a" style="right:45.60px;top:44.88px;line-height:80.0px;font-size:19.20px;color:#0a0a0a;font-weight:normal;-webkit-text-stroke:0.20px #0a0a0a;text-align:right;transform:scale(0.2150,0.2500);transform-origin:100% 50%;">35,072</div>
<div class="a" style="left:6.90px;top:88.35px;width:640.30px;height:6.95px;background:#f0f000;"></div>
<div class="a" style="left:1.2px;top:88.95px;width:4.7px;height:5.3px;background:#eceef0;box-shadow:inset 0 0 0 0.5px #c4c8cc;"></div>
<div class="a" style="left:2.4px;top:90.35px;width:1.6px;height:2.6px;background:linear-gradient(#2f6fa0,#1e8a6a);"></div>
<div class="a" style="left:8.00px;top:51.82px;line-height:80.0px;font-size:19.20px;color:#0a0a0a;font-weight:normal;-webkit-text-stroke:0.20px #0a0a0a;transform:scale(0.2275,0.2500);transform-origin:0 50%;">FlightSimulator.exe</div>
<div class="a" style="right:601.20px;top:51.82px;line-height:80.0px;font-size:19.20px;color:#0a0a0a;font-weight:normal;-webkit-text-stroke:0.20px #0a0a0a;text-align:right;transform:scale(0.2150,0.2500);transform-origin:100% 50%;">3716</div>
<div class="a" style="left:-824.83px;width:1860.47px;text-align:center;top:51.82px;line-height:80.0px;font-size:19.20px;color:#0a0a0a;font-weight:normal;-webkit-text-stroke:0.20px #0a0a0a;transform:scale(0.2150,0.2500);transform-origin:50% 50%;">TCPv6</div>
<div class="a" style="left:122.60px;top:51.82px;line-height:80.0px;font-size:19.20px;color:#0a0a0a;font-weight:normal;-webkit-text-stroke:0.20px #0a0a0a;transform:scale(0.2150,0.2500);transform-origin:0 50%;">Established</div>
<div class="a" style="left:151.80px;top:51.82px;line-height:80.0px;font-size:19.20px;color:#0a0a0a;font-weight:normal;-webkit-text-stroke:0.20px #0a0a0a;transform:scale(0.2150,0.2500);transform-origin:0 50%;">2600:6c4e:277f:e5e7:78a...</div>
<div class="a" style="right:455.20px;top:51.82px;line-height:80.0px;font-size:19.20px;color:#0a0a0a;font-weight:normal;-webkit-text-stroke:0.20px #0a0a0a;text-align:right;transform:scale(0.2150,0.2500);transform-origin:100% 50%;">64169</div>
<div class="a" style="left:239.50px;top:51.82px;line-height:80.0px;font-size:19.20px;color:#0a0a0a;font-weight:normal;-webkit-text-stroke:0.20px #0a0a0a;transform:scale(0.2150,0.2500);transform-origin:0 50%;">2600:1406:3c49a::10a6</div>
<div class="a" style="right:367.30px;top:51.82px;line-height:80.0px;font-size:19.20px;color:#0a0a0a;font-weight:normal;-webkit-text-stroke:0.20px #0a0a0a;text-align:right;transform:scale(0.2150,0.2500);transform-origin:100% 50%;">443</div>
<div class="a" style="right:316.20px;top:51.82px;line-height:80.0px;font-size:19.20px;color:#0a0a0a;font-weight:normal;-webkit-text-stroke:0.20px #0a0a0a;text-align:right;transform:scale(0.2150,0.2500);transform-origin:100% 50%;">3/10/2024 3:29:27 PM</div>
<div class="a" style="left:378.30px;top:51.82px;line-height:80.0px;font-size:19.20px;color:#0a0a0a;font-weight:normal;-webkit-text-stroke:0.20px #0a0a0a;transform:scale(0.2275,0.2500);transform-origin:0 50%;">FlightSimulator.exe</div>
<div class="a" style="right:199.10px;top:51.82px;line-height:80.0px;font-size:19.20px;color:#0a0a0a;font-weight:normal;-webkit-text-stroke:0.20px #0a0a0a;text-align:right;transform:scale(0.2150,0.2500);transform-origin:100% 50%;">7</div>
<div class="a" style="right:148.40px;top:51.82px;line-height:80.0px;font-size:19.20px;color:#0a0a0a;font-weight:normal;-webkit-text-stroke:0.20px #0a0a0a;text-align:right;transform:scale(0.2150,0.2500);transform-origin:100% 50%;">20</div>
<div class="a" style="right:97.00px;top:51.82px;line-height:80.0px;font-size:19.20px;color:#0a0a0a;font-weight:normal;-webkit-text-stroke:0.20px #0a0a0a;text-align:right;transform:scale(0.2150,0.2500);transform-origin:100% 50%;">990</div>
<div class="a" style="right:45.60px;top:51.82px;line-height:80.0px;font-size:19.20px;color:#0a0a0a;font-weight:normal;-webkit-text-stroke:0.20px #0a0a0a;text-align:right;transform:scale(0.2150,0.2500);transform-origin:100% 50%;">34,404</div>
<div class="a" style="left:1.2px;top:95.90px;width:4.7px;height:5.3px;background:#eceef0;box-shadow:inset 0 0 0 0.5px #c4c8cc;"></div>
<div class="a" style="left:2.4px;top:97.30px;width:1.6px;height:2.6px;background:linear-gradient(#2f6fa0,#1e8a6a);"></div>
<div class="a" style="left:8.00px;top:58.78px;line-height:80.0px;font-size:19.20px;color:#1a1a1a;font-weight:normal;-webkit-text-stroke:0.20px #1a1a1a;transform:scale(0.2275,0.2500);transform-origin:0 50%;">FlightSimulator.exe</div>
<div class="a" style="right:601.20px;top:58.78px;line-height:80.0px;font-size:19.20px;color:#1a1a1a;font-weight:normal;-webkit-text-stroke:0.20px #1a1a1a;text-align:right;transform:scale(0.2150,0.2500);transform-origin:100% 50%;">3716</div>
<div class="a" style="left:-824.83px;width:1860.47px;text-align:center;top:58.78px;line-height:80.0px;font-size:19.20px;color:#1a1a1a;font-weight:normal;-webkit-text-stroke:0.20px #1a1a1a;transform:scale(0.2150,0.2500);transform-origin:50% 50%;">TCP</div>
<div class="a" style="left:122.60px;top:58.78px;line-height:80.0px;font-size:19.20px;color:#1a1a1a;font-weight:normal;-webkit-text-stroke:0.20px #1a1a1a;transform:scale(0.2150,0.2500);transform-origin:0 50%;">Established</div>
<div class="a" style="left:151.80px;top:58.78px;line-height:80.0px;font-size:19.20px;color:#1a1a1a;font-weight:normal;-webkit-text-stroke:0.20px #1a1a1a;transform:scale(0.2150,0.2500);transform-origin:0 50%;">192.168.1.84</div>
<div class="a" style="right:455.20px;top:58.78px;line-height:80.0px;font-size:19.20px;color:#1a1a1a;font-weight:normal;-webkit-text-stroke:0.20px #1a1a1a;text-align:right;transform:scale(0.2150,0.2500);transform-origin:100% 50%;">58561</div>
<div class="a" style="left:239.50px;top:58.78px;line-height:80.0px;font-size:19.20px;color:#1a1a1a;font-weight:normal;-webkit-text-stroke:0.20px #1a1a1a;transform:scale(0.2150,0.2500);transform-origin:0 50%;">199.46.35.124</div>
<div class="a" style="right:367.30px;top:58.78px;line-height:80.0px;font-size:19.20px;color:#1a1a1a;font-weight:normal;-webkit-text-stroke:0.20px #1a1a1a;text-align:right;transform:scale(0.2150,0.2500);transform-origin:100% 50%;">443</div>
<div class="a" style="right:316.20px;top:58.78px;line-height:80.0px;font-size:19.20px;color:#1a1a1a;font-weight:normal;-webkit-text-stroke:0.20px #1a1a1a;text-align:right;transform:scale(0.2150,0.2500);transform-origin:100% 50%;">3/10/2024 3:07:26 PM</div>
<div class="a" style="left:378.30px;top:58.78px;line-height:80.0px;font-size:19.20px;color:#1a1a1a;font-weight:normal;-webkit-text-stroke:0.20px #1a1a1a;transform:scale(0.2275,0.2500);transform-origin:0 50%;">FlightSimulator.exe</div>
<div class="a" style="right:199.10px;top:58.78px;line-height:80.0px;font-size:19.20px;color:#1a1a1a;font-weight:normal;-webkit-text-stroke:0.20px #1a1a1a;text-align:right;transform:scale(0.2150,0.2500);transform-origin:100% 50%;">13</div>
<div class="a" style="right:148.40px;top:58.78px;line-height:80.0px;font-size:19.20px;color:#1a1a1a;font-weight:normal;-webkit-text-stroke:0.20px #1a1a1a;text-align:right;transform:scale(0.2150,0.2500);transform-origin:100% 50%;">145</div>
<div class="a" style="right:97.00px;top:58.78px;line-height:80.0px;font-size:19.20px;color:#1a1a1a;font-weight:normal;-webkit-text-stroke:0.20px #1a1a1a;text-align:right;transform:scale(0.2150,0.2500);transform-origin:100% 50%;">4,415</div>
<div class="a" style="right:45.60px;top:58.78px;line-height:80.0px;font-size:19.20px;color:#1a1a1a;font-weight:normal;-webkit-text-stroke:0.20px #1a1a1a;text-align:right;transform:scale(0.2150,0.2500);transform-origin:100% 50%;">11,086</div>
<div class="a" style="left:1.2px;top:102.85px;width:4.7px;height:5.3px;background:#eceef0;box-shadow:inset 0 0 0 0.5px #c4c8cc;"></div>
<div class="a" style="left:2.4px;top:104.25px;width:1.6px;height:2.6px;background:linear-gradient(#2f6fa0,#1e8a6a);"></div>
<div class="a" style="left:8.00px;top:65.72px;line-height:80.0px;font-size:19.20px;color:#1a1a1a;font-weight:normal;-webkit-text-stroke:0.20px #1a1a1a;transform:scale(0.2275,0.2500);transform-origin:0 50%;">FlightSimulator.exe</div>
<div class="a" style="right:601.20px;top:65.72px;line-height:80.0px;font-size:19.20px;color:#1a1a1a;font-weight:normal;-webkit-text-stroke:0.20px #1a1a1a;text-align:right;transform:scale(0.2150,0.2500);transform-origin:100% 50%;">3716</div>
<div class="a" style="left:-824.83px;width:1860.47px;text-align:center;top:65.72px;line-height:80.0px;font-size:19.20px;color:#1a1a1a;font-weight:normal;-webkit-text-stroke:0.20px #1a1a1a;transform:scale(0.2150,0.2500);transform-origin:50% 50%;">TCP</div>
<div class="a" style="left:122.60px;top:65.72px;line-height:80.0px;font-size:19.20px;color:#1a1a1a;font-weight:normal;-webkit-text-stroke:0.20px #1a1a1a;transform:scale(0.2150,0.2500);transform-origin:0 50%;">Close Wait</div>
<div class="a" style="left:151.80px;top:65.72px;line-height:80.0px;font-size:19.20px;color:#1a1a1a;font-weight:normal;-webkit-text-stroke:0.20px #1a1a1a;transform:scale(0.2150,0.2500);transform-origin:0 50%;">192.168.1.84</div>
<div class="a" style="right:455.20px;top:65.72px;line-height:80.0px;font-size:19.20px;color:#1a1a1a;font-weight:normal;-webkit-text-stroke:0.20px #1a1a1a;text-align:right;transform:scale(0.2150,0.2500);transform-origin:100% 50%;">58828</div>
<div class="a" style="left:239.50px;top:65.72px;line-height:80.0px;font-size:19.20px;color:#1a1a1a;font-weight:normal;-webkit-text-stroke:0.20px #1a1a1a;transform:scale(0.2150,0.2500);transform-origin:0 50%;">96.16.68.8</div>
<div class="a" style="right:367.30px;top:65.72px;line-height:80.0px;font-size:19.20px;color:#1a1a1a;font-weight:normal;-webkit-text-stroke:0.20px #1a1a1a;text-align:right;transform:scale(0.2150,0.2500);transform-origin:100% 50%;">443</div>
<div class="a" style="right:316.20px;top:65.72px;line-height:80.0px;font-size:19.20px;color:#1a1a1a;font-weight:normal;-webkit-text-stroke:0.20px #1a1a1a;text-align:right;transform:scale(0.2150,0.2500);transform-origin:100% 50%;">3/10/2024 3:08:13 PM</div>
<div class="a" style="left:378.30px;top:65.72px;line-height:80.0px;font-size:19.20px;color:#1a1a1a;font-weight:normal;-webkit-text-stroke:0.20px #1a1a1a;transform:scale(0.2275,0.2500);transform-origin:0 50%;">FlightSimulator.exe</div>
<div class="a" style="right:148.40px;top:65.72px;line-height:80.0px;font-size:19.20px;color:#1a1a1a;font-weight:normal;-webkit-text-stroke:0.20px #1a1a1a;text-align:right;transform:scale(0.2150,0.2500);transform-origin:100% 50%;">1</div>
<div class="a" style="right:45.60px;top:65.72px;line-height:80.0px;font-size:19.20px;color:#1a1a1a;font-weight:normal;-webkit-text-stroke:0.20px #1a1a1a;text-align:right;transform:scale(0.2150,0.2500);transform-origin:100% 50%;">31</div>
<div class="a" style="left:1.2px;top:109.80px;width:4.7px;height:5.3px;background:#eceef0;box-shadow:inset 0 0 0 0.5px #c4c8cc;"></div>
<div class="a" style="left:2.4px;top:111.20px;width:1.6px;height:2.6px;background:linear-gradient(#2f6fa0,#1e8a6a);"></div>
<div class="a" style="left:8.00px;top:72.67px;line-height:80.0px;font-size:19.20px;color:#1a1a1a;font-weight:normal;-webkit-text-stroke:0.20px #1a1a1a;transform:scale(0.2275,0.2500);transform-origin:0 50%;">FlightSimulator.exe</div>
<div class="a" style="right:601.20px;top:72.67px;line-height:80.0px;font-size:19.20px;color:#1a1a1a;font-weight:normal;-webkit-text-stroke:0.20px #1a1a1a;text-align:right;transform:scale(0.2150,0.2500);transform-origin:100% 50%;">3716</div>
<div class="a" style="left:-824.83px;width:1860.47px;text-align:center;top:72.67px;line-height:80.0px;font-size:19.20px;color:#1a1a1a;font-weight:normal;-webkit-text-stroke:0.20px #1a1a1a;transform:scale(0.2150,0.2500);transform-origin:50% 50%;">TCP</div>
<div class="a" style="left:122.60px;top:72.67px;line-height:80.0px;font-size:19.20px;color:#1a1a1a;font-weight:normal;-webkit-text-stroke:0.20px #1a1a1a;transform:scale(0.2150,0.2500);transform-origin:0 50%;">Listen</div>
<div class="a" style="left:151.80px;top:72.67px;line-height:80.0px;font-size:19.20px;color:#1a1a1a;font-weight:normal;-webkit-text-stroke:0.20px #1a1a1a;transform:scale(0.2150,0.2500);transform-origin:0 50%;">127.0.0.1</div>
<div class="a" style="right:455.20px;top:72.67px;line-height:80.0px;font-size:19.20px;color:#1a1a1a;font-weight:normal;-webkit-text-stroke:0.20px #1a1a1a;text-align:right;transform:scale(0.2150,0.2500);transform-origin:100% 50%;">500</div>
<div class="a" style="left:239.50px;top:72.67px;line-height:80.0px;font-size:19.20px;color:#1a1a1a;font-weight:normal;-webkit-text-stroke:0.20px #1a1a1a;transform:scale(0.2150,0.2500);transform-origin:0 50%;">0.0.0.0</div>
<div class="a" style="right:367.30px;top:72.67px;line-height:80.0px;font-size:19.20px;color:#1a1a1a;font-weight:normal;-webkit-text-stroke:0.20px #1a1a1a;text-align:right;transform:scale(0.2150,0.2500);transform-origin:100% 50%;">0</div>
<div class="a" style="right:316.20px;top:72.67px;line-height:80.0px;font-size:19.20px;color:#1a1a1a;font-weight:normal;-webkit-text-stroke:0.20px #1a1a1a;text-align:right;transform:scale(0.2150,0.2500);transform-origin:100% 50%;">3/10/2024 3:08:51 PM</div>
<div class="a" style="left:378.30px;top:72.67px;line-height:80.0px;font-size:19.20px;color:#1a1a1a;font-weight:normal;-webkit-text-stroke:0.20px #1a1a1a;transform:scale(0.2275,0.2500);transform-origin:0 50%;">FlightSimulator.exe</div>
<div class="a" style="left:1.2px;top:116.75px;width:4.7px;height:5.3px;background:#eceef0;box-shadow:inset 0 0 0 0.5px #c4c8cc;"></div>
<div class="a" style="left:2.4px;top:118.15px;width:1.6px;height:2.6px;background:linear-gradient(#2f6fa0,#1e8a6a);"></div>
<div class="a" style="left:8.00px;top:79.62px;line-height:80.0px;font-size:19.20px;color:#1a1a1a;font-weight:normal;-webkit-text-stroke:0.20px #1a1a1a;transform:scale(0.2275,0.2500);transform-origin:0 50%;">FlightSimulator.exe</div>
<div class="a" style="right:601.20px;top:79.62px;line-height:80.0px;font-size:19.20px;color:#1a1a1a;font-weight:normal;-webkit-text-stroke:0.20px #1a1a1a;text-align:right;transform:scale(0.2150,0.2500);transform-origin:100% 50%;">3716</div>
<div class="a" style="left:-824.83px;width:1860.47px;text-align:center;top:79.62px;line-height:80.0px;font-size:19.20px;color:#1a1a1a;font-weight:normal;-webkit-text-stroke:0.20px #1a1a1a;transform:scale(0.2150,0.2500);transform-origin:50% 50%;">TCP</div>
<div class="a" style="left:122.60px;top:79.62px;line-height:80.0px;font-size:19.20px;color:#1a1a1a;font-weight:normal;-webkit-text-stroke:0.20px #1a1a1a;transform:scale(0.2150,0.2500);transform-origin:0 50%;">Listen</div>
<div class="a" style="left:151.80px;top:79.62px;line-height:80.0px;font-size:19.20px;color:#1a1a1a;font-weight:normal;-webkit-text-stroke:0.20px #1a1a1a;transform:scale(0.2150,0.2500);transform-origin:0 50%;">0.0.0.0</div>
<div class="a" style="right:455.20px;top:79.62px;line-height:80.0px;font-size:19.20px;color:#1a1a1a;font-weight:normal;-webkit-text-stroke:0.20px #1a1a1a;text-align:right;transform:scale(0.2150,0.2500);transform-origin:100% 50%;">19999</div>
<div class="a" style="left:239.50px;top:79.62px;line-height:80.0px;font-size:19.20px;color:#1a1a1a;font-weight:normal;-webkit-text-stroke:0.20px #1a1a1a;transform:scale(0.2150,0.2500);transform-origin:0 50%;">0.0.0.0</div>
<div class="a" style="right:367.30px;top:79.62px;line-height:80.0px;font-size:19.20px;color:#1a1a1a;font-weight:normal;-webkit-text-stroke:0.20px #1a1a1a;text-align:right;transform:scale(0.2150,0.2500);transform-origin:100% 50%;">0</div>
<div class="a" style="right:316.20px;top:79.62px;line-height:80.0px;font-size:19.20px;color:#1a1a1a;font-weight:normal;-webkit-text-stroke:0.20px #1a1a1a;text-align:right;transform:scale(0.2150,0.2500);transform-origin:100% 50%;">3/10/2024 3:07:17 PM</div>
<div class="a" style="left:378.30px;top:79.62px;line-height:80.0px;font-size:19.20px;color:#1a1a1a;font-weight:normal;-webkit-text-stroke:0.20px #1a1a1a;transform:scale(0.2275,0.2500);transform-origin:0 50%;">FlightSimulator.exe</div>
<div class="a" style="left:1.2px;top:123.70px;width:4.7px;height:5.3px;background:#eceef0;box-shadow:inset 0 0 0 0.5px #c4c8cc;"></div>
<div class="a" style="left:2.4px;top:125.10px;width:1.6px;height:2.6px;background:linear-gradient(#2f6fa0,#1e8a6a);"></div>
<div class="a" style="left:8.00px;top:86.58px;line-height:80.0px;font-size:19.20px;color:#1a1a1a;font-weight:normal;-webkit-text-stroke:0.20px #1a1a1a;transform:scale(0.2275,0.2500);transform-origin:0 50%;">FlightSimulator.exe</div>
<div class="a" style="right:601.20px;top:86.58px;line-height:80.0px;font-size:19.20px;color:#1a1a1a;font-weight:normal;-webkit-text-stroke:0.20px #1a1a1a;text-align:right;transform:scale(0.2150,0.2500);transform-origin:100% 50%;">3716</div>
<div class="a" style="left:-824.83px;width:1860.47px;text-align:center;top:86.58px;line-height:80.0px;font-size:19.20px;color:#1a1a1a;font-weight:normal;-webkit-text-stroke:0.20px #1a1a1a;transform:scale(0.2150,0.2500);transform-origin:50% 50%;">TCP</div>
<div class="a" style="left:122.60px;top:86.58px;line-height:80.0px;font-size:19.20px;color:#1a1a1a;font-weight:normal;-webkit-text-stroke:0.20px #1a1a1a;transform:scale(0.2150,0.2500);transform-origin:0 50%;">Listen</div>
<div class="a" style="left:151.80px;top:86.58px;line-height:80.0px;font-size:19.20px;color:#1a1a1a;font-weight:normal;-webkit-text-stroke:0.20px #1a1a1a;transform:scale(0.2150,0.2500);transform-origin:0 50%;">0.0.0.0</div>
<div class="a" style="right:455.20px;top:86.58px;line-height:80.0px;font-size:19.20px;color:#1a1a1a;font-weight:normal;-webkit-text-stroke:0.20px #1a1a1a;text-align:right;transform:scale(0.2150,0.2500);transform-origin:100% 50%;">58546</div>
<div class="a" style="left:239.50px;top:86.58px;line-height:80.0px;font-size:19.20px;color:#1a1a1a;font-weight:normal;-webkit-text-stroke:0.20px #1a1a1a;transform:scale(0.2150,0.2500);transform-origin:0 50%;">0.0.0.0</div>
<div class="a" style="right:367.30px;top:86.58px;line-height:80.0px;font-size:19.20px;color:#1a1a1a;font-weight:normal;-webkit-text-stroke:0.20px #1a1a1a;text-align:right;transform:scale(0.2150,0.2500);transform-origin:100% 50%;">0</div>
<div class="a" style="right:316.20px;top:86.58px;line-height:80.0px;font-size:19.20px;color:#1a1a1a;font-weight:normal;-webkit-text-stroke:0.20px #1a1a1a;text-align:right;transform:scale(0.2150,0.2500);transform-origin:100% 50%;">3/10/2024 3:07:24 PM</div>
<div class="a" style="left:378.30px;top:86.58px;line-height:80.0px;font-size:19.20px;color:#1a1a1a;font-weight:normal;-webkit-text-stroke:0.20px #1a1a1a;transform:scale(0.2275,0.2500);transform-origin:0 50%;">FlightSimulator.exe</div>
<div class="a" style="left:1.2px;top:130.65px;width:4.7px;height:5.3px;background:#eceef0;box-shadow:inset 0 0 0 0.5px #c4c8cc;"></div>
<div class="a" style="left:2.4px;top:132.05px;width:1.6px;height:2.6px;background:linear-gradient(#2f6fa0,#1e8a6a);"></div>
<div class="a" style="left:8.00px;top:93.53px;line-height:80.0px;font-size:19.20px;color:#1a1a1a;font-weight:normal;-webkit-text-stroke:0.20px #1a1a1a;transform:scale(0.2275,0.2500);transform-origin:0 50%;">FlightSimulator.exe</div>
<div class="a" style="right:601.20px;top:93.53px;line-height:80.0px;font-size:19.20px;color:#1a1a1a;font-weight:normal;-webkit-text-stroke:0.20px #1a1a1a;text-align:right;transform:scale(0.2150,0.2500);transform-origin:100% 50%;">3716</div>
<div class="a" style="left:-824.83px;width:1860.47px;text-align:center;top:93.53px;line-height:80.0px;font-size:19.20px;color:#1a1a1a;font-weight:normal;-webkit-text-stroke:0.20px #1a1a1a;transform:scale(0.2150,0.2500);transform-origin:50% 50%;">TCP</div>
<div class="a" style="left:122.60px;top:93.53px;line-height:80.0px;font-size:19.20px;color:#1a1a1a;font-weight:normal;-webkit-text-stroke:0.20px #1a1a1a;transform:scale(0.2150,0.2500);transform-origin:0 50%;">Listen</div>
<div class="a" style="left:151.80px;top:93.53px;line-height:80.0px;font-size:19.20px;color:#1a1a1a;font-weight:normal;-webkit-text-stroke:0.20px #1a1a1a;transform:scale(0.2150,0.2500);transform-origin:0 50%;">0.0.0.0</div>
<div class="a" style="right:455.20px;top:93.53px;line-height:80.0px;font-size:19.20px;color:#1a1a1a;font-weight:normal;-webkit-text-stroke:0.20px #1a1a1a;text-align:right;transform:scale(0.2150,0.2500);transform-origin:100% 50%;">58547</div>
<div class="a" style="left:239.50px;top:93.53px;line-height:80.0px;font-size:19.20px;color:#1a1a1a;font-weight:normal;-webkit-text-stroke:0.20px #1a1a1a;transform:scale(0.2150,0.2500);transform-origin:0 50%;">0.0.0.0</div>
<div class="a" style="right:367.30px;top:93.53px;line-height:80.0px;font-size:19.20px;color:#1a1a1a;font-weight:normal;-webkit-text-stroke:0.20px #1a1a1a;text-align:right;transform:scale(0.2150,0.2500);transform-origin:100% 50%;">0</div>
<div class="a" style="right:316.20px;top:93.53px;line-height:80.0px;font-size:19.20px;color:#1a1a1a;font-weight:normal;-webkit-text-stroke:0.20px #1a1a1a;text-align:right;transform:scale(0.2150,0.2500);transform-origin:100% 50%;">3/10/2024 3:07:24 PM</div>
<div class="a" style="left:378.30px;top:93.53px;line-height:80.0px;font-size:19.20px;color:#1a1a1a;font-weight:normal;-webkit-text-stroke:0.20px #1a1a1a;transform:scale(0.2275,0.2500);transform-origin:0 50%;">FlightSimulator.exe</div>
<div class="a" style="left:1.2px;top:137.60px;width:4.7px;height:5.3px;background:#eceef0;box-shadow:inset 0 0 0 0.5px #c4c8cc;"></div>
<div class="a" style="left:2.4px;top:139.00px;width:1.6px;height:2.6px;background:linear-gradient(#2f6fa0,#1e8a6a);"></div>
<div class="a" style="left:8.00px;top:100.47px;line-height:80.0px;font-size:19.20px;color:#1a1a1a;font-weight:normal;-webkit-text-stroke:0.20px #1a1a1a;transform:scale(0.2275,0.2500);transform-origin:0 50%;">FlightSimulator.exe</div>
<div class="a" style="right:601.20px;top:100.47px;line-height:80.0px;font-size:19.20px;color:#1a1a1a;font-weight:normal;-webkit-text-stroke:0.20px #1a1a1a;text-align:right;transform:scale(0.2150,0.2500);transform-origin:100% 50%;">3716</div>
<div class="a" style="left:-824.83px;width:1860.47px;text-align:center;top:100.47px;line-height:80.0px;font-size:19.20px;color:#1a1a1a;font-weight:normal;-webkit-text-stroke:0.20px #1a1a1a;transform:scale(0.2150,0.2500);transform-origin:50% 50%;">TCP</div>
<div class="a" style="left:122.60px;top:100.47px;line-height:80.0px;font-size:19.20px;color:#1a1a1a;font-weight:normal;-webkit-text-stroke:0.20px #1a1a1a;transform:scale(0.2150,0.2500);transform-origin:0 50%;">Listen</div>
<div class="a" style="left:151.80px;top:100.47px;line-height:80.0px;font-size:19.20px;color:#1a1a1a;font-weight:normal;-webkit-text-stroke:0.20px #1a1a1a;transform:scale(0.2150,0.2500);transform-origin:0 50%;">127.0.0.1</div>
<div class="a" style="right:455.20px;top:100.47px;line-height:80.0px;font-size:19.20px;color:#1a1a1a;font-weight:normal;-webkit-text-stroke:0.20px #1a1a1a;text-align:right;transform:scale(0.2150,0.2500);transform-origin:100% 50%;">58959</div>
<div class="a" style="left:239.50px;top:100.47px;line-height:80.0px;font-size:19.20px;color:#1a1a1a;font-weight:normal;-webkit-text-stroke:0.20px #1a1a1a;transform:scale(0.2150,0.2500);transform-origin:0 50%;">0.0.0.0</div>
<div class="a" style="right:367.30px;top:100.47px;line-height:80.0px;font-size:19.20px;color:#1a1a1a;font-weight:normal;-webkit-text-stroke:0.20px #1a1a1a;text-align:right;transform:scale(0.2150,0.2500);transform-origin:100% 50%;">0</div>
<div class="a" style="right:316.20px;top:100.47px;line-height:80.0px;font-size:19.20px;color:#1a1a1a;font-weight:normal;-webkit-text-stroke:0.20px #1a1a1a;text-align:right;transform:scale(0.2150,0.2500);transform-origin:100% 50%;">3/10/2024 3:08:51 PM</div>
<div class="a" style="left:378.30px;top:100.47px;line-height:80.0px;font-size:19.20px;color:#1a1a1a;font-weight:normal;-webkit-text-stroke:0.20px #1a1a1a;transform:scale(0.2275,0.2500);transform-origin:0 50%;">FlightSimulator.exe</div>
<div class="a" style="left:1.2px;top:144.55px;width:4.7px;height:5.3px;background:#eceef0;box-shadow:inset 0 0 0 0.5px #c4c8cc;"></div>
<div class="a" style="left:2.4px;top:145.95px;width:1.6px;height:2.6px;background:linear-gradient(#2f6fa0,#1e8a6a);"></div>
<div class="a" style="left:8.00px;top:107.42px;line-height:80.0px;font-size:19.20px;color:#1a1a1a;font-weight:normal;-webkit-text-stroke:0.20px #1a1a1a;transform:scale(0.2275,0.2500);transform-origin:0 50%;">FlightSimulator.exe</div>
<div class="a" style="right:601.20px;top:107.42px;line-height:80.0px;font-size:19.20px;color:#1a1a1a;font-weight:normal;-webkit-text-stroke:0.20px #1a1a1a;text-align:right;transform:scale(0.2150,0.2500);transform-origin:100% 50%;">3716</div>
<div class="a" style="left:-824.83px;width:1860.47px;text-align:center;top:107.42px;line-height:80.0px;font-size:19.20px;color:#1a1a1a;font-weight:normal;-webkit-text-stroke:0.20px #1a1a1a;transform:scale(0.2150,0.2500);transform-origin:50% 50%;">TCPv6</div>
<div class="a" style="left:122.60px;top:107.42px;line-height:80.0px;font-size:19.20px;color:#1a1a1a;font-weight:normal;-webkit-text-stroke:0.20px #1a1a1a;transform:scale(0.2150,0.2500);transform-origin:0 50%;">Listen</div>
<div class="a" style="left:151.80px;top:107.42px;line-height:80.0px;font-size:19.20px;color:#1a1a1a;font-weight:normal;-webkit-text-stroke:0.20px #1a1a1a;transform:scale(0.2150,0.2500);transform-origin:0 50%;">::1</div>
<div class="a" style="right:455.20px;top:107.42px;line-height:80.0px;font-size:19.20px;color:#1a1a1a;font-weight:normal;-webkit-text-stroke:0.20px #1a1a1a;text-align:right;transform:scale(0.2150,0.2500);transform-origin:100% 50%;">501</div>
<div class="a" style="left:239.50px;top:107.42px;line-height:80.0px;font-size:19.20px;color:#1a1a1a;font-weight:normal;-webkit-text-stroke:0.20px #1a1a1a;transform:scale(0.2150,0.2500);transform-origin:0 50%;">::</div>
<div class="a" style="right:367.30px;top:107.42px;line-height:80.0px;font-size:19.20px;color:#1a1a1a;font-weight:normal;-webkit-text-stroke:0.20px #1a1a1a;text-align:right;transform:scale(0.2150,0.2500);transform-origin:100% 50%;">0</div>
<div class="a" style="right:316.20px;top:107.42px;line-height:80.0px;font-size:19.20px;color:#1a1a1a;font-weight:normal;-webkit-text-stroke:0.20px #1a1a1a;text-align:right;transform:scale(0.2150,0.2500);transform-origin:100% 50%;">3/10/2024 3:08:51 PM</div>
<div class="a" style="left:378.30px;top:107.42px;line-height:80.0px;font-size:19.20px;color:#1a1a1a;font-weight:normal;-webkit-text-stroke:0.20px #1a1a1a;transform:scale(0.2275,0.2500);transform-origin:0 50%;">FlightSimulator.exe</div>
<div class="a" style="left:1.2px;top:151.50px;width:4.7px;height:5.3px;background:#eceef0;box-shadow:inset 0 0 0 0.5px #c4c8cc;"></div>
<div class="a" style="left:2.4px;top:152.90px;width:1.6px;height:2.6px;background:linear-gradient(#2f6fa0,#1e8a6a);"></div>
<div class="a" style="left:8.00px;top:114.38px;line-height:80.0px;font-size:19.20px;color:#1a1a1a;font-weight:normal;-webkit-text-stroke:0.20px #1a1a1a;transform:scale(0.2275,0.2500);transform-origin:0 50%;">FlightSimulator.exe</div>
<div class="a" style="right:601.20px;top:114.38px;line-height:80.0px;font-size:19.20px;color:#1a1a1a;font-weight:normal;-webkit-text-stroke:0.20px #1a1a1a;text-align:right;transform:scale(0.2150,0.2500);transform-origin:100% 50%;">3716</div>
<div class="a" style="left:-824.83px;width:1860.47px;text-align:center;top:114.38px;line-height:80.0px;font-size:19.20px;color:#1a1a1a;font-weight:normal;-webkit-text-stroke:0.20px #1a1a1a;transform:scale(0.2150,0.2500);transform-origin:50% 50%;">TCPv6</div>
<div class="a" style="left:122.60px;top:114.38px;line-height:80.0px;font-size:19.20px;color:#1a1a1a;font-weight:normal;-webkit-text-stroke:0.20px #1a1a1a;transform:scale(0.2150,0.2500);transform-origin:0 50%;">Listen</div>
<div class="a" style="left:151.80px;top:114.38px;line-height:80.0px;font-size:19.20px;color:#1a1a1a;font-weight:normal;-webkit-text-stroke:0.20px #1a1a1a;transform:scale(0.2150,0.2500);transform-origin:0 50%;">::1</div>
<div class="a" style="right:455.20px;top:114.38px;line-height:80.0px;font-size:19.20px;color:#1a1a1a;font-weight:normal;-webkit-text-stroke:0.20px #1a1a1a;text-align:right;transform:scale(0.2150,0.2500);transform-origin:100% 50%;">58960</div>
<div class="a" style="left:239.50px;top:114.38px;line-height:80.0px;font-size:19.20px;color:#1a1a1a;font-weight:normal;-webkit-text-stroke:0.20px #1a1a1a;transform:scale(0.2150,0.2500);transform-origin:0 50%;">::</div>
<div class="a" style="right:367.30px;top:114.38px;line-height:80.0px;font-size:19.20px;color:#1a1a1a;font-weight:normal;-webkit-text-stroke:0.20px #1a1a1a;text-align:right;transform:scale(0.2150,0.2500);transform-origin:100% 50%;">0</div>
<div class="a" style="right:316.20px;top:114.38px;line-height:80.0px;font-size:19.20px;color:#1a1a1a;font-weight:normal;-webkit-text-stroke:0.20px #1a1a1a;text-align:right;transform:scale(0.2150,0.2500);transform-origin:100% 50%;">3/10/2024 3:08:51 PM</div>
<div class="a" style="left:378.30px;top:114.38px;line-height:80.0px;font-size:19.20px;color:#1a1a1a;font-weight:normal;-webkit-text-stroke:0.20px #1a1a1a;transform:scale(0.2275,0.2500);transform-origin:0 50%;">FlightSimulator.exe</div>
<div class="a" style="left:6.90px;top:157.85px;width:640.30px;height:6.95px;background:#00c000;"></div>
<div class="a" style="left:1.2px;top:158.45px;width:4.7px;height:5.3px;background:#eceef0;box-shadow:inset 0 0 0 0.5px #c4c8cc;"></div>
<div class="a" style="left:2.4px;top:159.85px;width:1.6px;height:2.6px;background:linear-gradient(#2f6fa0,#1e8a6a);"></div>
<div class="a" style="left:8.00px;top:121.33px;line-height:80.0px;font-size:19.20px;color:#0a0a0a;font-weight:normal;-webkit-text-stroke:0.20px #0a0a0a;transform:scale(0.2275,0.2500);transform-origin:0 50%;">FlightSimulator.exe</div>
<div class="a" style="right:601.20px;top:121.33px;line-height:80.0px;font-size:19.20px;color:#0a0a0a;font-weight:normal;-webkit-text-stroke:0.20px #0a0a0a;text-align:right;transform:scale(0.2150,0.2500);transform-origin:100% 50%;">3716</div>
<div class="a" style="left:-824.83px;width:1860.47px;text-align:center;top:121.33px;line-height:80.0px;font-size:19.20px;color:#0a0a0a;font-weight:normal;-webkit-text-stroke:0.20px #0a0a0a;transform:scale(0.2150,0.2500);transform-origin:50% 50%;">TCPv6</div>
<div class="a" style="left:122.60px;top:121.33px;line-height:80.0px;font-size:19.20px;color:#0a0a0a;font-weight:normal;-webkit-text-stroke:0.20px #0a0a0a;transform:scale(0.2150,0.2500);transform-origin:0 50%;">Established</div>
<div class="a" style="left:151.80px;top:121.33px;line-height:80.0px;font-size:19.20px;color:#0a0a0a;font-weight:normal;-webkit-text-stroke:0.20px #0a0a0a;transform:scale(0.2150,0.2500);transform-origin:0 50%;">2600:6c4e:277f:e5e7:78a...</div>
<div class="a" style="right:455.20px;top:121.33px;line-height:80.0px;font-size:19.20px;color:#0a0a0a;font-weight:normal;-webkit-text-stroke:0.20px #0a0a0a;text-align:right;transform:scale(0.2150,0.2500);transform-origin:100% 50%;">64175</div>
<div class="a" style="left:239.50px;top:121.33px;line-height:80.0px;font-size:19.20px;color:#0a0a0a;font-weight:normal;-webkit-text-stroke:0.20px #0a0a0a;transform:scale(0.2150,0.2500);transform-origin:0 50%;">2600:1406:3c49a::10a6</div>
<div class="a" style="right:367.30px;top:121.33px;line-height:80.0px;font-size:19.20px;color:#0a0a0a;font-weight:normal;-webkit-text-stroke:0.20px #0a0a0a;text-align:right;transform:scale(0.2150,0.2500);transform-origin:100% 50%;">443</div>
<div class="a" style="right:316.20px;top:121.33px;line-height:80.0px;font-size:19.20px;color:#0a0a0a;font-weight:normal;-webkit-text-stroke:0.20px #0a0a0a;text-align:right;transform:scale(0.2150,0.2500);transform-origin:100% 50%;">3/10/2024 3:29:30 PM</div>
<div class="a" style="left:378.30px;top:121.33px;line-height:80.0px;font-size:19.20px;color:#0a0a0a;font-weight:normal;-webkit-text-stroke:0.20px #0a0a0a;transform:scale(0.2275,0.2500);transform-origin:0 50%;">FlightSimulator.exe</div>
<div class="a" style="left:6.90px;top:164.80px;width:640.30px;height:6.95px;background:#00c000;"></div>
<div class="a" style="left:1.2px;top:165.40px;width:4.7px;height:5.3px;background:#eceef0;box-shadow:inset 0 0 0 0.5px #c4c8cc;"></div>
<div class="a" style="left:2.4px;top:166.80px;width:1.6px;height:2.6px;background:linear-gradient(#2f6fa0,#1e8a6a);"></div>
<div class="a" style="left:8.00px;top:128.28px;line-height:80.0px;font-size:19.20px;color:#0a0a0a;font-weight:normal;-webkit-text-stroke:0.20px #0a0a0a;transform:scale(0.2275,0.2500);transform-origin:0 50%;">FlightSimulator.exe</div>
<div class="a" style="right:601.20px;top:128.28px;line-height:80.0px;font-size:19.20px;color:#0a0a0a;font-weight:normal;-webkit-text-stroke:0.20px #0a0a0a;text-align:right;transform:scale(0.2150,0.2500);transform-origin:100% 50%;">3716</div>
<div class="a" style="left:-824.83px;width:1860.47px;text-align:center;top:128.28px;line-height:80.0px;font-size:19.20px;color:#0a0a0a;font-weight:normal;-webkit-text-stroke:0.20px #0a0a0a;transform:scale(0.2150,0.2500);transform-origin:50% 50%;">TCPv6</div>
<div class="a" style="left:122.60px;top:128.28px;line-height:80.0px;font-size:19.20px;color:#0a0a0a;font-weight:normal;-webkit-text-stroke:0.20px #0a0a0a;transform:scale(0.2150,0.2500);transform-origin:0 50%;">Established</div>
<div class="a" style="left:151.80px;top:128.28px;line-height:80.0px;font-size:19.20px;color:#0a0a0a;font-weight:normal;-webkit-text-stroke:0.20px #0a0a0a;transform:scale(0.2150,0.2500);transform-origin:0 50%;">2600:6c4e:277f:e5e7:78a...</div>
<div class="a" style="right:455.20px;top:128.28px;line-height:80.0px;font-size:19.20px;color:#0a0a0a;font-weight:normal;-webkit-text-stroke:0.20px #0a0a0a;text-align:right;transform:scale(0.2150,0.2500);transform-origin:100% 50%;">64176</div>
<div class="a" style="left:239.50px;top:128.28px;line-height:80.0px;font-size:19.20px;color:#0a0a0a;font-weight:normal;-webkit-text-stroke:0.20px #0a0a0a;transform:scale(0.2150,0.2500);transform-origin:0 50%;">2600:1406:3c49a::10a6</div>
<div class="a" style="right:367.30px;top:128.28px;line-height:80.0px;font-size:19.20px;color:#0a0a0a;font-weight:normal;-webkit-text-stroke:0.20px #0a0a0a;text-align:right;transform:scale(0.2150,0.2500);transform-origin:100% 50%;">443</div>
<div class="a" style="right:316.20px;top:128.28px;line-height:80.0px;font-size:19.20px;color:#0a0a0a;font-weight:normal;-webkit-text-stroke:0.20px #0a0a0a;text-align:right;transform:scale(0.2150,0.2500);transform-origin:100% 50%;">3/10/2024 3:29:30 PM</div>
<div class="a" style="left:378.30px;top:128.28px;line-height:80.0px;font-size:19.20px;color:#0a0a0a;font-weight:normal;-webkit-text-stroke:0.20px #0a0a0a;transform:scale(0.2275,0.2500);transform-origin:0 50%;">FlightSimulator.exe</div>
<div class="a" style="left:1.2px;top:172.35px;width:4.7px;height:5.3px;background:#eceef0;box-shadow:inset 0 0 0 0.5px #c4c8cc;"></div>
<div class="a" style="left:2.4px;top:173.75px;width:1.6px;height:2.6px;background:linear-gradient(#2f6fa0,#1e8a6a);"></div>
<div class="a" style="left:8.00px;top:135.22px;line-height:80.0px;font-size:19.20px;color:#1a1a1a;font-weight:normal;-webkit-text-stroke:0.20px #1a1a1a;transform:scale(0.2275,0.2500);transform-origin:0 50%;">FlightSimulator.exe</div>
<div class="a" style="right:601.20px;top:135.22px;line-height:80.0px;font-size:19.20px;color:#1a1a1a;font-weight:normal;-webkit-text-stroke:0.20px #1a1a1a;text-align:right;transform:scale(0.2150,0.2500);transform-origin:100% 50%;">3716</div>
<div class="a" style="left:-824.83px;width:1860.47px;text-align:center;top:135.22px;line-height:80.0px;font-size:19.20px;color:#1a1a1a;font-weight:normal;-webkit-text-stroke:0.20px #1a1a1a;transform:scale(0.2150,0.2500);transform-origin:50% 50%;">UDP</div>
<div class="a" style="left:151.80px;top:135.22px;line-height:80.0px;font-size:19.20px;color:#1a1a1a;font-weight:normal;-webkit-text-stroke:0.20px #1a1a1a;transform:scale(0.2150,0.2500);transform-origin:0 50%;">0.0.0.0</div>
<div class="a" style="right:455.20px;top:135.22px;line-height:80.0px;font-size:19.20px;color:#1a1a1a;font-weight:normal;-webkit-text-stroke:0.20px #1a1a1a;text-align:right;transform:scale(0.2150,0.2500);transform-origin:100% 50%;">24024</div>
<div class="a" style="left:239.50px;top:135.22px;line-height:80.0px;font-size:19.20px;color:#1a1a1a;font-weight:normal;-webkit-text-stroke:0.20px #1a1a1a;transform:scale(0.2150,0.2500);transform-origin:0 50%;">*</div>
<div class="a" style="right:316.20px;top:135.22px;line-height:80.0px;font-size:19.20px;color:#1a1a1a;font-weight:normal;-webkit-text-stroke:0.20px #1a1a1a;text-align:right;transform:scale(0.2150,0.2500);transform-origin:100% 50%;">3/10/2024 3:07:24 PM</div>
<div class="a" style="left:378.30px;top:135.22px;line-height:80.0px;font-size:19.20px;color:#1a1a1a;font-weight:normal;-webkit-text-stroke:0.20px #1a1a1a;transform:scale(0.2275,0.2500);transform-origin:0 50%;">FlightSimulator.exe</div>
<div class="a" style="left:0.8px;top:208.3px;width:700px;height:197px;background:#f1f1f1;border:0.8px solid #d4d4d4;border-radius:4px 4px 3px 3px;box-shadow:0 -1px 5px rgba(0,0,0,0.05);box-sizing:border-box;"></div>
<svg class="a" style="left:6.8px;top:214.8px" width="6.6" height="4.4" viewBox="0 0 6.6 4.4">
<rect x="0.2" y="0.2" width="6.2" height="4" fill="#e6f2fc" stroke="#9cc8ee" stroke-width="0.35"/>
<path d="M0.3 4.1 L0.9 2.0 L1.6 1.2 L2.3 2.4 L3.0 3.0 L3.7 1.6 L4.4 1.0 L5.2 2.2 L6.3 1.6 L6.3 4.1 Z" fill="#2e95e0"/>
</svg>
<div class="a" style="left:21.50px;top:177.60px;line-height:80.0px;font-size:18.40px;color:#444;font-weight:normal;transform:scale(0.2350,0.2500);transform-origin:0 50%;">Task Manager</div>
<svg class="a" style="left:640px;top:208px" width="50" height="14" viewBox="640 208 50 14">
<g fill="none" stroke="#5a5a5a" stroke-width="0.45">
<path d="M646.9 214.4 H650.6"/>
<rect x="663.7" y="212.6" width="3.4" height="3.4" rx="0.4"/>
<path d="M680.3 212.6 L683.9 216.2 M683.9 212.6 L680.3 216.2"/>
</g></svg>
<div class="a" style="left:7.00px;top:231.30px;width:5.30px;height:0.50px;background:#8a8a8a;"></div>
<div class="a" style="left:7.00px;top:233.30px;width:5.30px;height:0.50px;background:#8a8a8a;"></div>
<div class="a" style="left:7.00px;top:235.30px;width:5.30px;height:0.50px;background:#8a8a8a;"></div>
<div class="a" style="left:2.00px;top:256.10px;width:85.00px;height:13.00px;background:#e9e9e9;border-radius:2px;"></div>
<div class="a" style="left:2.00px;top:260.30px;width:1.30px;height:5.50px;background:#0f5fb8;border-radius:1px;"></div>
<div class="a" style="left:18.00px;top:208.90px;line-height:80.0px;font-size:22.40px;color:#222;font-weight:normal;-webkit-text-stroke:0.08px #222;transform:scale(0.2225,0.2500);transform-origin:0 50%;">Processes</div>
<div class="a" style="left:18.00px;top:223.20px;line-height:80.0px;font-size:22.40px;color:#222;font-weight:normal;-webkit-text-stroke:0.08px #222;transform:scale(0.2225,0.2500);transform-origin:0 50%;">Performance</div>
<div class="a" style="left:18.00px;top:237.90px;line-height:80.0px;font-size:22.40px;color:#222;font-weight:normal;-webkit-text-stroke:0.08px #222;transform:scale(0.2225,0.2500);transform-origin:0 50%;">App history</div>
<div class="a" style="left:18.00px;top:252.60px;line-height:80.0px;font-size:22.40px;color:#222;font-weight:normal;-webkit-text-stroke:0.08px #222;transform:scale(0.2225,0.2500);transform-origin:0 50%;">Startup apps</div>
<div class="a" style="left:18.00px;top:267.10px;line-height:80.0px;font-size:22.40px;color:#222;font-weight:normal;-webkit-text-stroke:0.08px #222;transform:scale(0.2225,0.2500);transform-origin:0 50%;">Users</div>
<div class="a" style="left:18.00px;top:281.60px;line-height:80.0px;font-size:22.40px;color:#222;font-weight:normal;-webkit-text-stroke:0.08px #222;transform:scale(0.2225,0.2500);transform-origin:0 50%;">Details</div>
<div class="a" style="left:18.00px;top:296.10px;line-height:80.0px;font-size:22.40px;color:#222;font-weight:normal;-webkit-text-stroke:0.08px #222;transform:scale(0.2225,0.2500);transform-origin:0 50%;">Services</div>
<div class="a" style="left:18.00px;top:356.40px;line-height:80.0px;font-size:22.40px;color:#222;font-weight:normal;-webkit-text-stroke:0.08px #222;transform:scale(0.2225,0.2500);transform-origin:0 50%;">Settings</div>
<svg class="a" style="left:0;top:240px" width="20" height="165" viewBox="0 240 20 165">
<g fill="none" stroke="#3c3c3c" stroke-width="0.75" stroke-linecap="round">
<rect x="7.1" y="245.4" width="2.6" height="5.4" rx="1.1"/>
<rect x="9.3" y="245.4" width="2.6" height="3.1" rx="1.1"/>
<rect x="7.0" y="260.2" width="5.1" height="5.2" rx="1.0"/>
<path d="M9.5 260.4 V262.7 H11.9 M7.2 262.9 H9.3 V265.3"/>
<path d="M7.4 276.0 A2.7 2.7 0 1 1 6.9 278.4"/>
<path d="M7.0 275.4 L7.4 276.3 L8.3 276.1"/>
<path d="M9.5 276.6 V278.0 L10.4 278.6"/>
<path d="M6.8 292.6 Q9.4 289.6 12.0 292.4"/>
<path d="M9.6 291.8 L8.7 294.0"/>
<circle cx="8.4" cy="304.9" r="1.2"/><circle cx="10.9" cy="305.4" r="1.0"/>
<path d="M6.6 308.6 Q6.8 306.6 8.4 306.6 Q10 306.6 10.2 308.6 Z"/>
<path d="M10.6 307.0 Q12.2 307 12.2 308.4"/>
<path d="M6.9 320.2 H12.1 M6.9 321.4 H12.1 M6.9 322.6 H12.1"/>
<path d="M11.2 334.2 A2.6 2.6 0 1 0 11.4 337.8"/>
<circle cx="9.3" cy="336.0" r="1.0"/>
<circle cx="9.4" cy="396.5" r="2.4"/>
<circle cx="9.4" cy="396.5" r="0.8"/>
<path d="M9.4 393.5 V394.0 M9.4 399.0 V399.5 M6.8 395.0 L7.2 395.3 M12.0 395.0 L11.6 395.3 M6.8 398.0 L7.2 397.7 M12.0 398.0 L11.6 397.7"/>
</g></svg>
<div class="a" style="left:88.8px;top:224.8px;width:610px;height:180.2px;background:#fdfdfd;border:0.6px solid #ececec;border-radius:4px 0 0 0;box-sizing:border-box;"></div>
<div class="a" style="left:95.00px;top:194.40px;line-height:80.0px;font-size:19.60px;color:#111;font-weight:normal;-webkit-text-stroke:0.48px #111;transform:scale(0.2575,0.2500);transform-origin:0 50%;">Performance</div>
<div class="a" style="left:89.40px;top:242.70px;width:601.00px;height:0.70px;background:#f2f2f2;"></div>
<svg class="a" style="left:630px;top:231px" width="8" height="7" viewBox="0 0 8 7">
<rect x="0.5" y="0.6" width="4.6" height="5" rx="0.6" fill="none" stroke="#444" stroke-width="0.5"/>
<path d="M0.5 1.8 h4.6" stroke="#444" stroke-width="0.5"/>
<circle cx="5.1" cy="5.2" r="1.5" fill="#222"/><circle cx="5.1" cy="5.2" r="0.5" fill="#fff"/>
</svg>
<div class="a" style="left:640.00px;top:194.40px;line-height:80.0px;font-size:17.60px;color:#1a1a1a;font-weight:normal;-webkit-text-stroke:0.24px #1a1a1a;transform:scale(0.2450,0.2500);transform-origin:0 50%;">Run new task</div>
<div class="a" style="left:671.60px;top:229.00px;width:0.50px;height:11.00px;background:#e5e5e5;"></div>
<div class="a" style="left:677.70px;top:233.90px;width:1.00px;height:1.00px;background:#222;border-radius:50%;"></div>
<div class="a" style="left:680.00px;top:233.90px;width:1.00px;height:1.00px;background:#222;border-radius:50%;"></div>
<div class="a" style="left:682.30px;top:233.90px;width:1.00px;height:1.00px;background:#222;border-radius:50%;"></div>
<div class="a" style="left:160.00px;top:245.90px;width:5.80px;height:159.00px;background:#efefef;"></div>
<div class="a" style="left:162.10px;top:280.80px;width:1.90px;height:88.80px;background:#909090;border-radius:1px;"></div>
<div class="a" style="left:90.50px;top:359.50px;width:69.00px;height:23.50px;background:#f0f0f0;border-radius:2px;"></div>
<div class="a" style="left:89.4px;top:245.2px;width:70.6px;height:159.80px;overflow:hidden;">
<div class="a" style="left:4.80px;top:-3.20px;width:21px;height:17.4px;border:0.5px solid #f1f1f1;box-sizing:border-box;background:#fff;"></div>
<div class="a" style="left:30.20px;top:-40.40px;line-height:80.0px;font-size:22.40px;color:#1a1a1a;font-weight:normal;transform:scale(0.2400,0.2500);transform-origin:0 50%;">Disk 0 (C:)</div>
<div class="a" style="left:30.20px;top:-34.30px;line-height:80.0px;font-size:18.80px;color:#111;font-weight:normal;-webkit-text-stroke:0.16px #111;transform:scale(0.2375,0.2500);transform-origin:0 50%;">SSD</div>
<div class="a" style="left:30.20px;top:-28.80px;line-height:80.0px;font-size:18.80px;color:#111;font-weight:normal;-webkit-text-stroke:0.16px #111;transform:scale(0.2375,0.2500);transform-origin:0 50%;">1%</div>
<div class="a" style="left:4.80px;top:20.90px;width:21px;height:17.4px;border:0.5px solid #f1f1f1;box-sizing:border-box;background:#fff;"></div>
<div class="a" style="left:30.20px;top:-16.30px;line-height:80.0px;font-size:22.40px;color:#1a1a1a;font-weight:normal;transform:scale(0.2400,0.2500);transform-origin:0 50%;">Disk 1 (D:)</div>
<div class="a" style="left:30.20px;top:-10.20px;line-height:80.0px;font-size:18.80px;color:#111;font-weight:normal;-webkit-text-stroke:0.16px #111;transform:scale(0.2375,0.2500);transform-origin:0 50%;">SSD</div>
<div class="a" style="left:30.20px;top:-4.70px;line-height:80.0px;font-size:18.80px;color:#111;font-weight:normal;-webkit-text-stroke:0.16px #111;transform:scale(0.2375,0.2500);transform-origin:0 50%;">3%</div>
<div class="a" style="left:4.80px;top:45.00px;width:21px;height:17.4px;border:0.5px solid #f1f1f1;box-sizing:border-box;background:#fff;"></div>
<div class="a" style="left:30.20px;top:7.80px;line-height:80.0px;font-size:22.40px;color:#1a1a1a;font-weight:normal;transform:scale(0.2400,0.2500);transform-origin:0 50%;">Disk 2 (T:)</div>
<div class="a" style="left:30.20px;top:13.90px;line-height:80.0px;font-size:18.80px;color:#111;font-weight:normal;-webkit-text-stroke:0.16px #111;transform:scale(0.2375,0.2500);transform-origin:0 50%;">HDD</div>
<div class="a" style="left:30.20px;top:19.40px;line-height:80.0px;font-size:18.80px;color:#111;font-weight:normal;-webkit-text-stroke:0.16px #111;transform:scale(0.2375,0.2500);transform-origin:0 50%;">0%</div>
<div class="a" style="left:4.80px;top:69.10px;width:21px;height:17.4px;border:0.5px solid #f1f1f1;box-sizing:border-box;background:#fff;"></div>
<div class="a" style="left:30.20px;top:31.90px;line-height:80.0px;font-size:22.40px;color:#1a1a1a;font-weight:normal;transform:scale(0.2400,0.2500);transform-origin:0 50%;">Disk 3 (G:)</div>
<div class="a" style="left:30.20px;top:38.00px;line-height:80.0px;font-size:18.80px;color:#111;font-weight:normal;-webkit-text-stroke:0.16px #111;transform:scale(0.2375,0.2500);transform-origin:0 50%;">HDD</div>
<div class="a" style="left:30.20px;top:43.50px;line-height:80.0px;font-size:18.80px;color:#111;font-weight:normal;-webkit-text-stroke:0.16px #111;transform:scale(0.2375,0.2500);transform-origin:0 50%;">0%</div>
<div class="a" style="left:4.80px;top:93.20px;width:21px;height:17.4px;border:0.5px solid #f1f1f1;box-sizing:border-box;background:#fff;"></div>
<div class="a" style="left:30.20px;top:56.00px;line-height:80.0px;font-size:22.40px;color:#1a1a1a;font-weight:normal;transform:scale(0.2400,0.2500);transform-origin:0 50%;">Disk 4 (H:)</div>
<div class="a" style="left:30.20px;top:62.10px;line-height:80.0px;font-size:18.80px;color:#111;font-weight:normal;-webkit-text-stroke:0.16px #111;transform:scale(0.2375,0.2500);transform-origin:0 50%;">HDD</div>
<div class="a" style="left:30.20px;top:67.60px;line-height:80.0px;font-size:18.80px;color:#111;font-weight:normal;-webkit-text-stroke:0.16px #111;transform:scale(0.2375,0.2500);transform-origin:0 50%;">0%</div>
<div class="a" style="left:4.80px;top:117.30px;width:21px;height:17.4px;border:0.5px solid #f1f1f1;box-sizing:border-box;background:#fff;"></div>
<div class="a" style="left:30.20px;top:80.10px;line-height:80.0px;font-size:22.40px;color:#1a1a1a;font-weight:normal;transform:scale(0.2400,0.2500);transform-origin:0 50%;">Ethernet</div>
<div class="a" style="left:30.20px;top:86.20px;line-height:80.0px;font-size:18.80px;color:#111;font-weight:normal;-webkit-text-stroke:0.16px #111;transform:scale(0.2375,0.2500);transform-origin:0 50%;">Ethernet</div>
<div class="a" style="left:30.20px;top:91.70px;line-height:80.0px;font-size:18.80px;color:#111;font-weight:normal;-webkit-text-stroke:0.16px #111;transform:scale(0.2375,0.2500);transform-origin:0 50%;">S: 0.1 R: 2.2 Mbps</div>
<div class="a" style="left:4.80px;top:141.40px;width:21px;height:17.4px;border:0.5px solid #f1f1f1;box-sizing:border-box;background:#fff;"></div>
<div class="a" style="left:30.20px;top:104.20px;line-height:80.0px;font-size:22.40px;color:#1a1a1a;font-weight:normal;transform:scale(0.2400,0.2500);transform-origin:0 50%;">Ethernet</div>
<div class="a" style="left:30.20px;top:110.30px;line-height:80.0px;font-size:18.80px;color:#111;font-weight:normal;-webkit-text-stroke:0.16px #111;transform:scale(0.2375,0.2500);transform-origin:0 50%;">VMware Network ...</div>
<div class="a" style="left:30.20px;top:115.80px;line-height:80.0px;font-size:18.80px;color:#111;font-weight:normal;-webkit-text-stroke:0.16px #111;transform:scale(0.2375,0.2500);transform-origin:0 50%;">S: 0 R: 0 Kbps</div>
<svg class="a" style="left:4.80px;top:-3.20px" width="21" height="17.4" viewBox="0 0 21 17.4">
<path d="M0.8 16.4 H19" stroke="#72c25a" stroke-width="0.6" stroke-dasharray="1.3 0.9" fill="none"/>
<path d="M20.2 16.6 V10.2" stroke="#5cb84a" stroke-width="0.9"/>
</svg>
<svg class="a" style="left:4.80px;top:20.90px" width="21" height="17.4" viewBox="0 0 21 17.4">
<path d="M0.5 16.8 V12.6 M0.5 16.6 H20.5 M7.3 16.6 V13.6" stroke="#6cc04a" stroke-width="0.7" fill="none"/>
</svg>
</div>
<svg class="a" style="left:94.2px;top:362.1px" width="21" height="17.3" viewBox="0 0 21 17.3">
<path d="M0.3 5.0 H20.7" stroke="#e6b894" stroke-width="0.55" stroke-dasharray="1.1 0.5"/>
<path d="M0.3 14.5 L1 13.5 L1.8 15 L2.6 12.5 L3.6 6.9 L4.3 13 L5 11.5 L5.8 15.2 L6.6 14 L7.4 14.8 L8.1 11 L8.8 4.4 L9.5 13.8 L10.3 15 L11 13.6 L11.8 14.6 L12.6 12.5 L13.4 15 L14.2 13.5 L15 12.8 L15.8 14.8 L16.6 12.6 L17.4 14 L18.4 5.9 L19 14.6 L19.8 13.5 L20.6 15.2 L20.6 16 L0.3 16 Z" fill="#f9ebe0" stroke="none"/>
<path d="M0.3 14.5 L1 13.5 L1.8 15 L2.6 12.5 L3.6 6.9 L4.3 13 L5 11.5 L5.8 15.2 L6.6 14 L7.4 14.8 L8.1 11 L8.8 4.4 L9.5 13.8 L10.3 15 L11 13.6 L11.8 14.6 L12.6 12.5 L13.4 15 L14.2 13.5 L15 12.8 L15.8 14.8 L16.6 12.6 L17.4 14 L18.4 5.9 L19 14.6 L19.8 13.5 L20.6 15.2" fill="none" stroke="#c8773a" stroke-width="0.7"/>
</svg>
<div class="a" style="left:175.20px;top:215.00px;line-height:80.0px;font-size:42.00px;color:#111;font-weight:normal;-webkit-text-stroke:0.48px #111;transform:scale(0.2375,0.2500);transform-origin:0 50%;">Ethernet</div>
<div class="a" style="left:176.00px;top:225.60px;line-height:80.0px;font-size:16.40px;color:#666;font-weight:normal;transform:scale(0.2750,0.2500);transform-origin:0 50%;">Throughput</div>
<div class="a" style="right:9.00px;top:216.80px;line-height:80.0px;font-size:24.00px;color:#111;font-weight:normal;-webkit-text-stroke:0.20px #111;text-align:right;transform:scale(0.2325,0.2500);transform-origin:100% 50%;">Realtek Gaming GbE Family Controller</div>
<div class="a" style="right:9.00px;top:225.40px;line-height:80.0px;font-size:16.80px;color:#555;font-weight:normal;text-align:right;transform:scale(0.2625,0.2500);transform-origin:100% 50%;">11 Mbps</div>
<svg class="a" style="left:175.8px;top:268.7px;overflow:visible" width="505.10" height="84.50" viewBox="0 0 505.10 84.50">
<polygon points="0,84.50 0.00,51.80 8.56,62.30 17.12,66.20 25.68,74.80 34.24,72.40 42.81,76.60 51.37,46.60 59.93,76.90 68.49,70.30 77.05,78.70 85.61,30.40 94.17,76.60 102.73,45.30 111.29,67.50 119.85,82.60 128.42,64.30 136.98,67.50 145.54,69.60 154.10,76.60 162.66,70.50 171.22,65.50 179.78,76.30 188.34,77.70 196.90,79.00 205.46,68.50 214.03,21.30 222.59,61.30 231.15,74.80 239.71,67.70 248.27,67.00 256.83,74.00 265.39,72.40 273.95,65.70 282.51,74.80 291.07,78.20 299.64,78.20 308.20,84.30 316.76,69.60 325.32,67.00 333.88,65.40 342.44,68.50 351.00,71.10 359.56,72.20 368.12,80.80 376.68,69.00 385.25,60.40 393.81,75.60 402.37,82.60 410.93,78.20 419.49,72.70 428.05,24.70 436.61,65.70 445.17,71.40 453.73,63.60 462.29,73.70 470.86,65.10 479.42,77.90 487.98,64.30 496.54,79.00 505.10,68.50 505.10,84.50" fill="#fcf1e8"/>
<line x1="0" y1="8.45" x2="505.10" y2="8.45" stroke="rgba(0,0,0,0.07)" stroke-width="0.7"/>
<line x1="0" y1="16.90" x2="505.10" y2="16.90" stroke="rgba(0,0,0,0.07)" stroke-width="0.7"/>
<line x1="0" y1="25.35" x2="505.10" y2="25.35" stroke="rgba(0,0,0,0.07)" stroke-width="0.7"/>
<line x1="0" y1="33.80" x2="505.10" y2="33.80" stroke="rgba(0,0,0,0.07)" stroke-width="0.7"/>
<line x1="0" y1="42.25" x2="505.10" y2="42.25" stroke="rgba(0,0,0,0.07)" stroke-width="0.7"/>
<line x1="0" y1="50.70" x2="505.10" y2="50.70" stroke="rgba(0,0,0,0.07)" stroke-width="0.7"/>
<line x1="0" y1="59.15" x2="505.10" y2="59.15" stroke="rgba(0,0,0,0.07)" stroke-width="0.7"/>
<line x1="0" y1="67.60" x2="505.10" y2="67.60" stroke="rgba(0,0,0,0.07)" stroke-width="0.7"/>
<line x1="0" y1="76.05" x2="505.10" y2="76.05" stroke="rgba(0,0,0,0.07)" stroke-width="0.7"/>
<line x1="25.68" y1="0" x2="25.68" y2="84.50" stroke="rgba(0,0,0,0.07)" stroke-width="0.7"/>
<line x1="51.37" y1="0" x2="51.37" y2="84.50" stroke="rgba(0,0,0,0.07)" stroke-width="0.7"/>
<line x1="77.05" y1="0" x2="77.05" y2="84.50" stroke="rgba(0,0,0,0.07)" stroke-width="0.7"/>
<line x1="102.73" y1="0" x2="102.73" y2="84.50" stroke="rgba(0,0,0,0.07)" stroke-width="0.7"/>
<line x1="128.42" y1="0" x2="128.42" y2="84.50" stroke="rgba(0,0,0,0.07)" stroke-width="0.7"/>
<line x1="154.10" y1="0" x2="154.10" y2="84.50" stroke="rgba(0,0,0,0.07)" stroke-width="0.7"/>
<line x1="179.78" y1="0" x2="179.78" y2="84.50" stroke="rgba(0,0,0,0.07)" stroke-width="0.7"/>
<line x1="205.46" y1="0" x2="205.46" y2="84.50" stroke="rgba(0,0,0,0.07)" stroke-width="0.7"/>
<line x1="231.15" y1="0" x2="231.15" y2="84.50" stroke="rgba(0,0,0,0.07)" stroke-width="0.7"/>
<line x1="256.83" y1="0" x2="256.83" y2="84.50" stroke="rgba(0,0,0,0.07)" stroke-width="0.7"/>
<line x1="282.51" y1="0" x2="282.51" y2="84.50" stroke="rgba(0,0,0,0.07)" stroke-width="0.7"/>
<line x1="308.20" y1="0" x2="308.20" y2="84.50" stroke="rgba(0,0,0,0.07)" stroke-width="0.7"/>
<line x1="333.88" y1="0" x2="333.88" y2="84.50" stroke="rgba(0,0,0,0.07)" stroke-width="0.7"/>
<line x1="359.56" y1="0" x2="359.56" y2="84.50" stroke="rgba(0,0,0,0.07)" stroke-width="0.7"/>
<line x1="385.25" y1="0" x2="385.25" y2="84.50" stroke="rgba(0,0,0,0.07)" stroke-width="0.7"/>
<line x1="410.93" y1="0" x2="410.93" y2="84.50" stroke="rgba(0,0,0,0.07)" stroke-width="0.7"/>
<line x1="436.61" y1="0" x2="436.61" y2="84.50" stroke="rgba(0,0,0,0.07)" stroke-width="0.7"/>
<line x1="462.29" y1="0" x2="462.29" y2="84.50" stroke="rgba(0,0,0,0.07)" stroke-width="0.7"/>
<line x1="487.98" y1="0" x2="487.98" y2="84.50" stroke="rgba(0,0,0,0.07)" stroke-width="0.7"/>
<rect x="0" y="0" width="505.10" height="84.50" fill="none" stroke="#e9e9e9" stroke-width="0.6"/>
<line x1="0" y1="25.40" x2="505.10" y2="25.40" stroke="#ebd0bb" stroke-width="1.0"/>
<polyline points="0.00,51.80 8.56,62.30 17.12,66.20 25.68,74.80 34.24,72.40 42.81,76.60 51.37,46.60 59.93,76.90 68.49,70.30 77.05,78.70 85.61,30.40 94.17,76.60 102.73,45.30 111.29,67.50 119.85,82.60 128.42,64.30 136.98,67.50 145.54,69.60 154.10,76.60 162.66,70.50 171.22,65.50 179.78,76.30 188.34,77.70 196.90,79.00 205.46,68.50 214.03,21.30 222.59,61.30 231.15,74.80 239.71,67.70 248.27,67.00 256.83,74.00 265.39,72.40 273.95,65.70 282.51,74.80 291.07,78.20 299.64,78.20 308.20,84.30 316.76,69.60 325.32,67.00 333.88,65.40 342.44,68.50 351.00,71.10 359.56,72.20 368.12,80.80 376.68,69.00 385.25,60.40 393.81,75.60 402.37,82.60 410.93,78.20 419.49,72.70 428.05,24.70 436.61,65.70 445.17,71.40 453.73,63.60 462.29,73.70 470.86,65.10 479.42,77.90 487.98,64.30 496.54,79.00 505.10,68.50" fill="none" stroke="#d3966a" stroke-width="0.75" stroke-linejoin="round"/>
<polyline points="0.00,84.00 8.56,84.00 17.12,84.00 25.68,83.80 34.24,84.00 42.81,84.00 51.37,84.00 59.93,84.00 68.49,84.00 77.05,84.00 85.61,83.70 94.17,84.00 102.73,84.00 111.29,84.00 119.85,84.00 128.42,84.00 136.98,84.00 145.54,84.00 154.10,84.00 162.66,84.00 171.22,84.00 179.78,84.00 188.34,84.00 196.90,84.00 205.46,84.00 214.03,83.40 222.59,84.00 231.15,84.00 239.71,84.00 248.27,84.00 256.83,84.00 265.39,84.00 273.95,84.00 282.51,84.00 291.07,84.00 299.64,84.00 308.20,83.70 316.76,84.00 325.32,84.00 333.88,84.00 342.44,84.00 351.00,84.00 359.56,84.00 368.12,84.00 376.68,84.00 385.25,83.70 393.81,84.00 402.37,84.00 410.93,84.00 419.49,84.00 428.05,83.50 436.61,84.00 445.17,84.00 453.73,84.00 462.29,84.00 470.86,84.00 479.42,84.00 487.98,84.00 496.54,84.00 505.10,84.00" fill="none" stroke="#e6ad86" stroke-width="0.6"/>
</svg>
<div class="a" style="right:9.00px;top:250.50px;line-height:80.0px;font-size:16.80px;color:#555;font-weight:normal;text-align:right;transform:scale(0.2625,0.2500);transform-origin:100% 50%;">1.7 Mbps</div>
<div class="a" style="left:176.00px;top:317.60px;line-height:80.0px;font-size:15.60px;color:#666;font-weight:normal;transform:scale(0.2575,0.2500);transform-origin:0 50%;">60 seconds</div>
<div class="a" style="right:9.00px;top:317.30px;line-height:80.0px;font-size:15.60px;color:#666;font-weight:normal;text-align:right;transform:scale(0.2500,0.2500);transform-origin:100% 50%;">0</div>
<div class="a" style="left:175.4px;top:364px;width:1.3px;height:14px;background:repeating-linear-gradient(#e4a67a 0 0.9px, transparent 0.9px 1.8px);"></div>
<div class="a" style="left:175.40px;top:383.20px;width:1.40px;height:14.50px;background:#d6a27c;"></div>
<div class="a" style="left:179.00px;top:326.20px;line-height:80.0px;font-size:18.00px;color:#666;font-weight:normal;transform:scale(0.2500,0.2500);transform-origin:0 50%;">Send</div>
<div class="a" style="left:178.60px;top:334.60px;line-height:80.0px;font-size:27.60px;color:#111;font-weight:normal;transform:scale(0.2500,0.2500);transform-origin:0 50%;">72.0 Kbps</div>
<div class="a" style="left:179.00px;top:345.00px;line-height:80.0px;font-size:18.00px;color:#666;font-weight:normal;transform:scale(0.2500,0.2500);transform-origin:0 50%;">Receive</div>
<div class="a" style="left:178.60px;top:353.50px;line-height:80.0px;font-size:27.60px;color:#111;font-weight:normal;transform:scale(0.2500,0.2500);transform-origin:0 50%;">2.2 Mbps</div>
<div class="a" style="left:216.70px;top:325.90px;line-height:80.0px;font-size:17.60px;color:#666;font-weight:normal;transform:scale(0.2475,0.2500);transform-origin:0 50%;">Adapter name:</div>
<div class="a" style="left:255.00px;top:325.90px;line-height:80.0px;font-size:17.60px;color:#111;font-weight:normal;-webkit-text-stroke:0.20px #111;transform:scale(0.2400,0.2500);transform-origin:0 50%;">Ethernet</div>
<div class="a" style="left:216.70px;top:332.45px;line-height:80.0px;font-size:17.60px;color:#666;font-weight:normal;transform:scale(0.2475,0.2500);transform-origin:0 50%;">DNS name:</div>
<div class="a" style="left:255.00px;top:332.45px;line-height:80.0px;font-size:17.60px;color:#111;font-weight:normal;-webkit-text-stroke:0.20px #111;transform:scale(0.2400,0.2500);transform-origin:0 50%;">nv.charter.com</div>
<div class="a" style="left:216.70px;top:339.00px;line-height:80.0px;font-size:17.60px;color:#666;font-weight:normal;transform:scale(0.2475,0.2500);transform-origin:0 50%;">Connection type:</div>
<div class="a" style="left:255.00px;top:339.00px;line-height:80.0px;font-size:17.60px;color:#111;font-weight:normal;-webkit-text-stroke:0.20px #111;transform:scale(0.2400,0.2500);transform-origin:0 50%;">Ethernet</div>
<div class="a" style="left:216.70px;top:345.55px;line-height:80.0px;font-size:17.60px;color:#666;font-weight:normal;transform:scale(0.2475,0.2500);transform-origin:0 50%;">IPv4 address:</div>
<div class="a" style="left:255.00px;top:345.55px;line-height:80.0px;font-size:17.60px;color:#111;font-weight:normal;-webkit-text-stroke:0.20px #111;transform:scale(0.2400,0.2500);transform-origin:0 50%;">192.168.1.84</div>
<div class="a" style="left:216.70px;top:352.10px;line-height:80.0px;font-size:17.60px;color:#666;font-weight:normal;transform:scale(0.2475,0.2500);transform-origin:0 50%;">IPv6 address:</div>
<div class="a" style="left:255.00px;top:352.10px;line-height:80.0px;font-size:17.60px;color:#111;font-weight:normal;-webkit-text-stroke:0.20px #111;transform:scale(0.2400,0.2500);transform-origin:0 50%;">2600:6c4e:277f:e5e7:244e:77dc:c3cb:bc76</div>
<div class="a" style="left:0.00px;top:404.80px;width:690.00px;height:8.50px;background:#e2e2e2;border-top:0.6px solid #ececec;border-bottom:0.6px solid #f2f2f2;box-sizing:border-box;"></div>
<div class="a" style="left:0.00px;top:413.30px;width:690.00px;height:4.00px;background:#1c1c1c;"></div>
<div class="a" style="left:1.80px;top:370.00px;line-height:80.0px;font-size:19.60px;color:#111;font-weight:normal;-webkit-text-stroke:0.24px #111;transform:scale(0.2150,0.2500);transform-origin:0 50%;">Endpoints: 580</div>
<div class="a" style="left:43.60px;top:405.80px;width:0.60px;height:7.30px;background:#c6c6c6;"></div>
<div class="a" style="left:45.40px;top:370.00px;line-height:80.0px;font-size:19.60px;color:#111;font-weight:normal;-webkit-text-stroke:0.24px #111;transform:scale(0.2150,0.2500);transform-origin:0 50%;">Established: 200</div>
<div class="a" style="left:87.20px;top:405.80px;width:0.60px;height:7.30px;background:#c6c6c6;"></div>
<div class="a" style="left:89.00px;top:370.00px;line-height:80.0px;font-size:19.60px;color:#111;font-weight:normal;-webkit-text-stroke:0.24px #111;transform:scale(0.2150,0.2500);transform-origin:0 50%;">Listening: 69</div>
<div class="a" style="left:131.00px;top:405.80px;width:0.60px;height:7.30px;background:#c6c6c6;"></div>
<div class="a" style="left:132.80px;top:370.00px;line-height:80.0px;font-size:19.60px;color:#111;font-weight:normal;-webkit-text-stroke:0.24px #111;transform:scale(0.2150,0.2500);transform-origin:0 50%;">Time Wait: 170</div>
<div class="a" style="left:174.70px;top:405.80px;width:0.60px;height:7.30px;background:#c6c6c6;"></div>
<div class="a" style="left:176.50px;top:370.00px;line-height:80.0px;font-size:19.60px;color:#111;font-weight:normal;-webkit-text-stroke:0.24px #111;transform:scale(0.2150,0.2500);transform-origin:0 50%;">Close Wait: 24</div>
<div class="a" style="left:218.20px;top:405.80px;width:0.60px;height:7.30px;background:#c6c6c6;"></div>
<div class="a" style="left:220.00px;top:370.00px;line-height:80.0px;font-size:19.60px;color:#111;font-weight:normal;-webkit-text-stroke:0.24px #111;transform:scale(0.2150,0.2500);transform-origin:0 50%;">Update: 2 sec</div>
<div class="a" style="left:262.30px;top:405.80px;width:0.60px;height:7.30px;background:#c6c6c6;"></div>
</body></html>
